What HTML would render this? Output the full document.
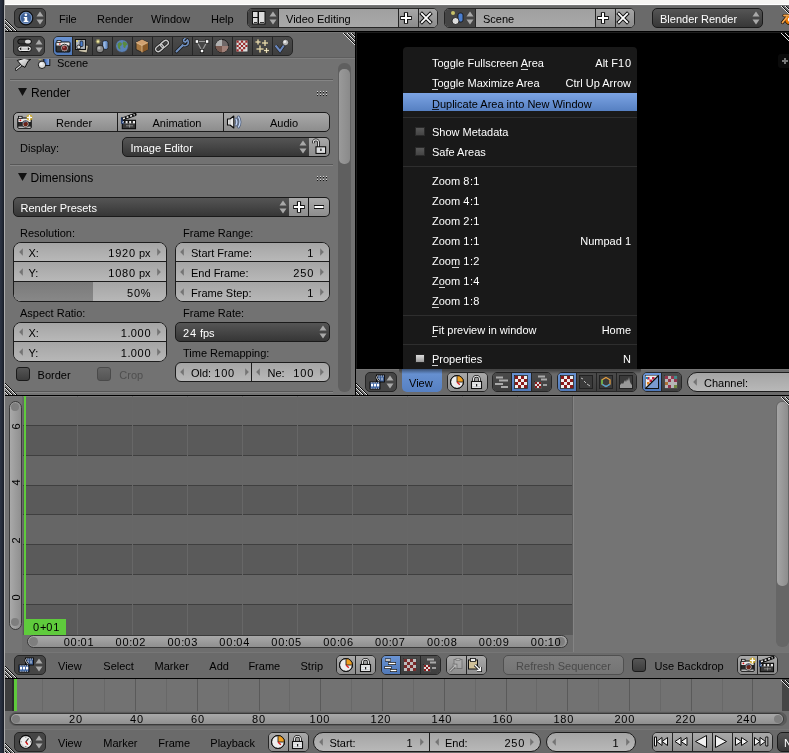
<!DOCTYPE html>
<html><head><meta charset="utf-8"><style>
*{margin:0;padding:0;box-sizing:border-box}
html,body{width:789px;height:753px;overflow:hidden;background:#727272;font-family:"Liberation Sans",sans-serif;font-size:11px;color:#000}
.a{position:absolute}
.t{position:absolute;white-space:nowrap;line-height:1}
.d{letter-spacing:0.8px}
body{will-change:transform}
.corner{position:absolute;width:11px;height:11px;background:repeating-linear-gradient(45deg,#1a1a1a 0 1.1px,#b8b8b8 1.1px 2.2px);clip-path:polygon(0 0,100% 100%,0 100%)}
</style></head><body>
<div class="a" style="left:0px;top:0px;width:4px;height:753px;background:linear-gradient(90deg,#2b3242,#252c3a 50%,#161a24)"></div>
<div class="a" style="left:4px;top:0px;width:1px;height:753px;background:#adadad"></div>
<div class="a" style="left:5px;top:0px;width:784px;height:5px;background:#f6f5f3;border-bottom:1px solid #fff"></div>
<div class="a" style="left:5px;top:5px;width:784px;height:26px;background:#6a6a6a;border-top:1px solid #767676"></div>
<div class="a" style="left:5px;top:31px;width:784px;height:1px;background:#000"></div>
<div class="a" style="left:14px;top:8px;width:32px;height:20px;background:#454545;border:1px solid #262626;border-radius:5px"></div>
<svg class="a" style="left:18px;top:10px;" width="16" height="16" viewBox="0 0 16 16"><circle cx="8" cy="8" r="6.8" fill="#3d5f95" stroke="#111" stroke-width="1.2"/><circle cx="8" cy="8" r="5.6" fill="none" stroke="#8aa6cf" stroke-width="0.8"/><rect x="6.6" y="7" width="2.6" height="4.6" fill="#fff"/><rect x="5.6" y="10.8" width="4.8" height="1.3" fill="#fff"/><rect x="5.8" y="7" width="2.4" height="1.1" fill="#fff"/><circle cx="7.9" cy="4.8" r="1.3" fill="#fff"/></svg>
<svg class="a" style="left:36px;top:11px;" width="8" height="14" viewBox="0 0 8 14"><path d="M4 0.5L7.5 5.5H0.5Z" fill="#a9a9a9"/><path d="M4 13.5L7.5 8.5H0.5Z" fill="#a9a9a9"/></svg>
<div class="t" style="left:59px;top:14.2px;font-size:11px;color:#000;">File</div>
<div class="t" style="left:97px;top:14.2px;font-size:11px;color:#000;">Render</div>
<div class="t" style="left:151px;top:14.2px;font-size:11px;color:#000;">Window</div>
<div class="t" style="left:211px;top:14.2px;font-size:11px;color:#000;">Help</div>
<svg class="a" style="left:5px;top:19px;" width="12" height="12" viewBox="0 0 12 12"><rect x="0" y="0" width="1" height="1" fill="#0a0a0a"/><rect x="0" y="1" width="1" height="1" fill="#e6e6e6"/><rect x="1" y="1" width="1" height="1" fill="#0a0a0a"/><rect x="1" y="2" width="1" height="1" fill="#e6e6e6"/><rect x="2" y="2" width="1" height="1" fill="#0a0a0a"/><rect x="2" y="3" width="1" height="1" fill="#e6e6e6"/><rect x="3" y="3" width="1" height="1" fill="#0a0a0a"/><rect x="0" y="4" width="1" height="1" fill="#0a0a0a"/><rect x="3" y="4" width="1" height="1" fill="#e6e6e6"/><rect x="4" y="4" width="1" height="1" fill="#0a0a0a"/><rect x="0" y="5" width="1" height="1" fill="#e6e6e6"/><rect x="1" y="5" width="1" height="1" fill="#0a0a0a"/><rect x="4" y="5" width="1" height="1" fill="#e6e6e6"/><rect x="5" y="5" width="1" height="1" fill="#0a0a0a"/><rect x="1" y="6" width="1" height="1" fill="#e6e6e6"/><rect x="2" y="6" width="1" height="1" fill="#0a0a0a"/><rect x="5" y="6" width="1" height="1" fill="#e6e6e6"/><rect x="6" y="6" width="1" height="1" fill="#0a0a0a"/><rect x="2" y="7" width="1" height="1" fill="#e6e6e6"/><rect x="3" y="7" width="1" height="1" fill="#0a0a0a"/><rect x="6" y="7" width="1" height="1" fill="#e6e6e6"/><rect x="7" y="7" width="1" height="1" fill="#0a0a0a"/><rect x="0" y="8" width="1" height="1" fill="#0a0a0a"/><rect x="3" y="8" width="1" height="1" fill="#e6e6e6"/><rect x="4" y="8" width="1" height="1" fill="#0a0a0a"/><rect x="7" y="8" width="1" height="1" fill="#e6e6e6"/><rect x="8" y="8" width="1" height="1" fill="#0a0a0a"/><rect x="0" y="9" width="1" height="1" fill="#e6e6e6"/><rect x="1" y="9" width="1" height="1" fill="#0a0a0a"/><rect x="4" y="9" width="1" height="1" fill="#e6e6e6"/><rect x="5" y="9" width="1" height="1" fill="#0a0a0a"/><rect x="8" y="9" width="1" height="1" fill="#e6e6e6"/><rect x="9" y="9" width="1" height="1" fill="#0a0a0a"/><rect x="1" y="10" width="1" height="1" fill="#e6e6e6"/><rect x="2" y="10" width="1" height="1" fill="#0a0a0a"/><rect x="5" y="10" width="1" height="1" fill="#e6e6e6"/><rect x="6" y="10" width="1" height="1" fill="#0a0a0a"/><rect x="9" y="10" width="1" height="1" fill="#e6e6e6"/><rect x="10" y="10" width="1" height="1" fill="#0a0a0a"/><rect x="2" y="11" width="1" height="1" fill="#e6e6e6"/><rect x="3" y="11" width="1" height="1" fill="#0a0a0a"/><rect x="6" y="11" width="1" height="1" fill="#e6e6e6"/><rect x="7" y="11" width="1" height="1" fill="#0a0a0a"/><rect x="10" y="11" width="1" height="1" fill="#e6e6e6"/><rect x="11" y="11" width="1" height="1" fill="#0a0a0a"/></svg>
<div class="a" style="left:247px;top:8px;width:191px;height:20px;border:1px solid #262626;border-radius:5px;overflow:hidden;background:linear-gradient(#a0a0a0,#a8a8a8)"><div class="a" style="left:0;top:0;width:31px;height:18px;background:#454545;border-right:1px solid #262626"></div><div class="a" style="left:150px;top:0;width:20px;height:18px;background:linear-gradient(#a6a6a6,#8c8c8c);border-left:1px solid #262626"></div><div class="a" style="left:170px;top:0;width:20px;height:18px;background:linear-gradient(#a6a6a6,#8c8c8c);border-left:1px solid #262626"></div></div>
<svg class="a" style="left:399px;top:11px;" width="14" height="14" viewBox="0 0 14 14"><path d="M7 1.2v11.6M1.2 7h11.6" stroke="#111" stroke-width="4.2"/><path d="M7 2v10M2 7h10" stroke="#fff" stroke-width="2"/></svg>
<svg class="a" style="left:419px;top:11px;" width="14" height="14" viewBox="0 0 14 14"><path d="M1.6 1.6l10.8 10.8M12.4 1.6l-10.8 10.8" stroke="#111" stroke-width="3.8"/><path d="M2.2 2.2l9.6 9.6M11.8 2.2l-9.6 9.6" stroke="#fff" stroke-width="1.8"/></svg>
<svg class="a" style="left:252px;top:11px;" width="14" height="14" viewBox="0 0 14 14"><rect x="0.5" y="0.5" width="5.5" height="6" fill="#ddd" stroke="#111"/><rect x="0.5" y="6.5" width="5.5" height="6.5" fill="#ddd" stroke="#111"/><rect x="6.5" y="0.5" width="6.5" height="12.5" fill="#ddd" stroke="#111"/><path d="M2 11.5h3M8 11.5h4" stroke="#333"/></svg>
<svg class="a" style="left:269px;top:11px;" width="8" height="14" viewBox="0 0 8 14"><path d="M4 0.5L7.5 5.5H0.5Z" fill="#a9a9a9"/><path d="M4 13.5L7.5 8.5H0.5Z" fill="#a9a9a9"/></svg>
<div class="t" style="left:286px;top:14.2px;font-size:11px;color:#000;">Video Editing</div>
<div class="a" style="left:444px;top:8px;width:191px;height:20px;border:1px solid #262626;border-radius:5px;overflow:hidden;background:linear-gradient(#a0a0a0,#a8a8a8)"><div class="a" style="left:0;top:0;width:31px;height:18px;background:#454545;border-right:1px solid #262626"></div><div class="a" style="left:150px;top:0;width:20px;height:18px;background:linear-gradient(#a6a6a6,#8c8c8c);border-left:1px solid #262626"></div><div class="a" style="left:170px;top:0;width:20px;height:18px;background:linear-gradient(#a6a6a6,#8c8c8c);border-left:1px solid #262626"></div></div>
<svg class="a" style="left:596px;top:11px;" width="14" height="14" viewBox="0 0 14 14"><path d="M7 1.2v11.6M1.2 7h11.6" stroke="#111" stroke-width="4.2"/><path d="M7 2v10M2 7h10" stroke="#fff" stroke-width="2"/></svg>
<svg class="a" style="left:616px;top:11px;" width="14" height="14" viewBox="0 0 14 14"><path d="M1.6 1.6l10.8 10.8M12.4 1.6l-10.8 10.8" stroke="#111" stroke-width="3.8"/><path d="M2.2 2.2l9.6 9.6M11.8 2.2l-9.6 9.6" stroke="#fff" stroke-width="1.8"/></svg>
<svg class="a" style="left:449px;top:10px;" width="16" height="16" viewBox="0 0 16 16"><circle cx="4" cy="3" r="2" fill="#e8e070" opacity="0.8"/><rect x="9" y="3" width="5" height="9" rx="2" fill="#4a7ed0" stroke="#111" stroke-width="0.8"/><circle cx="6.5" cy="11" r="3.5" fill="#ddd" stroke="#111" stroke-width="0.8"/></svg>
<svg class="a" style="left:466px;top:11px;" width="8" height="14" viewBox="0 0 8 14"><path d="M4 0.5L7.5 5.5H0.5Z" fill="#a9a9a9"/><path d="M4 13.5L7.5 8.5H0.5Z" fill="#a9a9a9"/></svg>
<div class="t" style="left:483px;top:14.2px;font-size:11px;color:#000;">Scene</div>
<div class="a" style="left:652px;top:8px;width:111px;height:20px;background:linear-gradient(#555,#373737);border:1px solid #1a1a1a;border-radius:5px"></div>
<div class="t" style="left:660px;top:14.2px;font-size:11px;color:#fff;">Blender Render</div>
<svg class="a" style="left:752px;top:11px;" width="8" height="14" viewBox="0 0 8 14"><path d="M4 0.5L7.5 5.5H0.5Z" fill="#a9a9a9"/><path d="M4 13.5L7.5 8.5H0.5Z" fill="#a9a9a9"/></svg>
<svg class="a" style="left:780px;top:13px;" width="9" height="12" viewBox="0 0 9 12"><path d="M4 2.5H9M2.5 9.5L6.5 4.5" stroke="#1a1008" stroke-width="3.2" stroke-linecap="round"/><circle cx="9.5" cy="7" r="4.6" fill="#e87800" stroke="#1a1008" stroke-width="0.9"/><path d="M4 2.5H9M2.5 9.5L6.5 4.5" stroke="#f6a850" stroke-width="1.8" stroke-linecap="round"/><circle cx="10" cy="6.6" r="2.2" fill="#fff"/></svg>
<svg class="a" style="left:781px;top:6px;" width="8" height="12" viewBox="0 0 8 12"><rect x="0" y="0" width="1" height="1" fill="#e6e6e6"/><rect x="1" y="0" width="1" height="1" fill="#0a0a0a"/><rect x="4" y="0" width="1" height="1" fill="#e6e6e6"/><rect x="5" y="0" width="1" height="1" fill="#0a0a0a"/><rect x="1" y="1" width="1" height="1" fill="#e6e6e6"/><rect x="2" y="1" width="1" height="1" fill="#0a0a0a"/><rect x="5" y="1" width="1" height="1" fill="#e6e6e6"/><rect x="6" y="1" width="1" height="1" fill="#0a0a0a"/><rect x="2" y="2" width="1" height="1" fill="#e6e6e6"/><rect x="3" y="2" width="1" height="1" fill="#0a0a0a"/><rect x="6" y="2" width="1" height="1" fill="#e6e6e6"/><rect x="7" y="2" width="1" height="1" fill="#0a0a0a"/><rect x="3" y="3" width="1" height="1" fill="#e6e6e6"/><rect x="4" y="3" width="1" height="1" fill="#0a0a0a"/><rect x="7" y="3" width="1" height="1" fill="#e6e6e6"/><rect x="4" y="4" width="1" height="1" fill="#e6e6e6"/><rect x="5" y="4" width="1" height="1" fill="#0a0a0a"/><rect x="5" y="5" width="1" height="1" fill="#e6e6e6"/><rect x="6" y="5" width="1" height="1" fill="#0a0a0a"/><rect x="6" y="6" width="1" height="1" fill="#e6e6e6"/><rect x="7" y="6" width="1" height="1" fill="#0a0a0a"/><rect x="7" y="7" width="1" height="1" fill="#e6e6e6"/></svg>
<div class="a" style="left:5px;top:32px;width:350px;height:363px;background:#727272"></div>
<div class="a" style="left:5px;top:32px;width:350px;height:26px;background:#6a6a6a;border-top:1px solid #767676;border-bottom:1px solid #5e5e5e"></div>
<div class="a" style="left:5px;top:58px;width:350px;height:1px;background:#7e7e7e"></div>
<div class="a" style="left:13px;top:36px;width:32px;height:20px;background:#454545;border:1px solid #262626;border-radius:5px"></div>
<svg class="a" style="left:17px;top:38px;" width="16" height="16" viewBox="0 0 16 16"><rect x="0.8" y="1.2" width="13.5" height="4.8" rx="2.4" fill="#3a3a3a" stroke="#0a0a0a"/><rect x="8" y="1.7" width="5.8" height="3.8" rx="1.8" fill="#d8d8d8"/><rect x="0.8" y="8" width="13.5" height="5.5" rx="2.5" fill="#f0f0f0" stroke="#0a0a0a"/><rect x="4" y="9.5" width="7" height="2.5" fill="#c8c8c8"/><path d="M2.3 10.75L4.2 9.1V12.4ZM12.8 10.75L10.9 9.1V12.4Z" fill="#111"/></svg>
<svg class="a" style="left:35px;top:39px;" width="8" height="14" viewBox="0 0 8 14"><path d="M4 0.5L7.5 5.5H0.5Z" fill="#a9a9a9"/><path d="M4 13.5L7.5 8.5H0.5Z" fill="#a9a9a9"/></svg>
<div class="a" style="left:53px;top:36px;width:240px;height:20px;border:1px solid #262626;border-radius:5px;overflow:hidden;background:linear-gradient(#4b4b4b,#3e3e3e)"><div class="a" style="left:18px;top:0;width:1px;height:18px;background:#262626"></div><div class="a" style="left:38px;top:0;width:1px;height:18px;background:#262626"></div><div class="a" style="left:58px;top:0;width:1px;height:18px;background:#262626"></div><div class="a" style="left:78px;top:0;width:1px;height:18px;background:#262626"></div><div class="a" style="left:98px;top:0;width:1px;height:18px;background:#262626"></div><div class="a" style="left:118px;top:0;width:1px;height:18px;background:#262626"></div><div class="a" style="left:138px;top:0;width:1px;height:18px;background:#262626"></div><div class="a" style="left:158px;top:0;width:1px;height:18px;background:#262626"></div><div class="a" style="left:178px;top:0;width:1px;height:18px;background:#262626"></div><div class="a" style="left:198px;top:0;width:1px;height:18px;background:#262626"></div><div class="a" style="left:218px;top:0;width:1px;height:18px;background:#262626"></div><div class="a" style="left:0;top:0;width:18px;height:18px;background:linear-gradient(#6a94d4,#4f78b8)"></div></div>
<svg class="a" style="left:55px;top:38px;" width="16" height="16" viewBox="0 0 16 16"><rect x="1" y="4" width="14" height="10" rx="1" fill="#333" stroke="#0a0a0a"/><rect x="1.5" y="4.5" width="13" height="3" fill="#e8e8e8"/><rect x="2" y="2.5" width="4" height="2" fill="#ddd" stroke="#111" stroke-width="0.7"/><circle cx="9.5" cy="10" r="3.8" fill="#ccc" stroke="#111" stroke-width="0.8"/><circle cx="9.5" cy="10" r="2.6" fill="#6a2020"/><circle cx="8.8" cy="9.3" r="1" fill="#c06060"/><rect x="4" y="5.5" width="1.5" height="1.2" fill="#e22"/></svg>
<svg class="a" style="left:74px;top:38px;" width="16" height="16" viewBox="0 0 16 16"><path d="M6 6L14.5 7.5L13 15L4.5 13.5Z" fill="#c8c0a8" stroke="#222" stroke-width="0.8"/><rect x="1.5" y="1.5" width="10" height="10" fill="#98a0a8" stroke="#111"/><rect x="2.5" y="2.5" width="8" height="8" fill="#b0b8c0"/><circle cx="4.8" cy="9" r="2" fill="#ddd" stroke="#111" stroke-width="0.8"/><rect x="6" y="3" width="3" height="5.5" rx="1" fill="#4a7ed0" stroke="#111" stroke-width="0.7"/><circle cx="3" cy="3" r="1" fill="#e8d870"/></svg>
<svg class="a" style="left:94px;top:38px;" width="16" height="16" viewBox="0 0 16 16"><circle cx="4" cy="3.5" r="2.4" fill="#c8c070" opacity="0.5"/><circle cx="4" cy="3.5" r="1.2" fill="#f0e8a0"/><rect x="8.5" y="2.5" width="5.5" height="9" rx="2" fill="#6a90c8" stroke="#222" stroke-width="0.8"/><rect x="9.5" y="4" width="2" height="6" fill="#9ab8e0"/><circle cx="6" cy="11" r="3.8" fill="#8a8a8a" stroke="#111" stroke-width="0.8"/><circle cx="5" cy="10" r="1.5" fill="#bbb"/></svg>
<svg class="a" style="left:114px;top:38px;" width="16" height="16" viewBox="0 0 16 16"><circle cx="8" cy="8" r="6.5" fill="#5a82b8" stroke="#1a1a1a"/><path d="M3.5 6c1.5-2 3-2 4-1s0 2.5-1 3 0 2 0 3-2 0-2.5-1.5M9.5 3.5c2 0 3.5 1.5 4 3.5-1 0-2 .5-2 2s-1.5 1-2 0 .5-2-.5-2.5 0-2.5.5-3" fill="#5a8a40"/><circle cx="8" cy="8" r="6.5" fill="none" stroke="#c8d8e8" stroke-width="0.5" opacity="0.5"/></svg>
<svg class="a" style="left:134px;top:38px;" width="16" height="16" viewBox="0 0 16 16"><path d="M8 1.5L14 4.5V11.5L8 14.5L2 11.5V4.5Z" fill="#a87840" stroke="#222" stroke-width="0.9"/><path d="M2 4.5L8 1.5L14 4.5L8 7.5Z" fill="#d0a070"/><path d="M8 7.5L14 4.5V11.5L8 14.5Z" fill="#8a5a28"/><path d="M2 4.5L8 7.5L14 4.5M8 7.5V14.5" stroke="#e8c8a0" fill="none" stroke-width="0.7"/></svg>
<svg class="a" style="left:154px;top:38px;" width="16" height="16" viewBox="0 0 16 16"><g transform="rotate(-40 8 8)"><rect x="0.5" y="5.5" width="8.5" height="5" rx="2.5" fill="none" stroke="#1a1a1a" stroke-width="2.8"/><rect x="7" y="5.5" width="8.5" height="5" rx="2.5" fill="none" stroke="#1a1a1a" stroke-width="2.8"/><rect x="0.5" y="5.5" width="8.5" height="5" rx="2.5" fill="none" stroke="#c8c8c8" stroke-width="1.4"/><rect x="7" y="5.5" width="8.5" height="5" rx="2.5" fill="none" stroke="#c8c8c8" stroke-width="1.4"/></g></svg>
<svg class="a" style="left:174px;top:38px;" width="16" height="16" viewBox="0 0 16 16"><path d="M2.5 13.5L8.5 7.5" stroke="#1a1a1a" stroke-width="3.6" stroke-linecap="round"/><path d="M8 6.5a3.5 3.5 0 1 0 5.5-4.5L11.5 4 10 3.5 9.5 2 11.5 0" fill="none" stroke="#1a1a1a" stroke-width="3"/><path d="M2.5 13.5L8.5 7.5" stroke="#7090c0" stroke-width="2" stroke-linecap="round"/><path d="M8 6.5a3.5 3.5 0 1 0 5.5-4.5L11.5 4 10 3.5 9.5 2 11.5 0" fill="none" stroke="#7090c0" stroke-width="1.6"/></svg>
<svg class="a" style="left:194px;top:38px;" width="16" height="16" viewBox="0 0 16 16"><path d="M3 3.5H13L8 13Z" fill="none" stroke="#999" stroke-width="1.2"/><rect x="1.2" y="1.8" width="3.4" height="3.4" fill="#fff" stroke="#111" stroke-width="0.7"/><rect x="11.4" y="1.8" width="3.4" height="3.4" fill="#fff" stroke="#111" stroke-width="0.7"/><rect x="6.3" y="11.3" width="3.4" height="3.4" fill="#fff" stroke="#111" stroke-width="0.7"/></svg>
<svg class="a" style="left:214px;top:38px;" width="16" height="16" viewBox="0 0 16 16"><circle cx="8" cy="8" r="6.5" fill="#706868" stroke="#1a1a1a"/><path d="M8 1.5A6.5 6.5 0 0 0 1.5 8H8Z" fill="#b0b0b0"/><path d="M8 8H14.5A6.5 6.5 0 0 1 8 14.5Z" fill="#a08078"/><path d="M8 8V14.5A6.5 6.5 0 0 1 1.5 8Z" fill="#7a5a50"/></svg>
<svg class="a" style="left:234px;top:38px;" width="16" height="16" viewBox="0 0 16 16"><rect x="1.5" y="1.5" width="13" height="13" fill="#3a3a3a"/><rect x="2.5" y="2.5" width="11" height="11" fill="#ddd"/><path d="M2.5 2.5h2.2v2.2H2.5zM6.9 2.5h2.2v2.2H6.9zM11.3 2.5h2.2v2.2h-2.2zM4.7 4.7h2.2v2.2H4.7zM9.1 4.7h2.2v2.2H9.1zM2.5 6.9h2.2v2.2H2.5zM6.9 6.9h2.2v2.2H6.9zM11.3 6.9h2.2v2.2h-2.2zM4.7 9.1h2.2v2.2H4.7zM9.1 9.1h2.2v2.2H9.1zM2.5 11.3h2.2v2.2H2.5zM6.9 11.3h2.2v2.2H6.9z" fill="#9a2a2a"/></svg>
<svg class="a" style="left:254px;top:38px;" width="16" height="16" viewBox="0 0 16 16"><path d="M4 1.5v5M1.5 4h5M11 2v6M8 5h6M6 7.5v7M2.5 11h7M12.5 10v5M10 12.5h5" stroke="#c8b060" stroke-width="1.6" opacity="0.6"/><path d="M4 1.5v5M1.5 4h5M11 2v6M8 5h6M6 7.5v7M2.5 11h7M12.5 10v5M10 12.5h5" stroke="#f8f0d0" stroke-width="0.8"/></svg>
<svg class="a" style="left:274px;top:38px;" width="16" height="16" viewBox="0 0 16 16"><path d="M1.5 7.5L6 13L11.5 5" fill="none" stroke="#222" stroke-width="3.4"/><path d="M1.5 7.5L6 13L11.5 5" fill="none" stroke="#6a88c0" stroke-width="2"/><circle cx="11.5" cy="4.5" r="3.2" fill="#bbb" stroke="#222" stroke-width="0.8"/><circle cx="10.8" cy="3.8" r="1.3" fill="#eee"/></svg>
<svg class="a" style="left:15px;top:57px;clip-path:inset(2px 0 0 0)" width="17" height="14" viewBox="0 0 17 14"><defs><linearGradient id="pg" x1="0" y1="0" x2="1" y2="1"><stop offset="0" stop-color="#fff"/><stop offset="1" stop-color="#999"/></linearGradient><linearGradient id="cg" x1="0" y1="0" x2="1" y2="0"><stop offset="0" stop-color="#2a58b0"/><stop offset="1" stop-color="#9ab8e8"/></linearGradient></defs><path d="M6.2 8.2L1.3 12.3" stroke="#0a0a0a" stroke-width="2.8" stroke-linecap="round"/><path d="M6.2 8.2L1.3 12.3" stroke="#ddd" stroke-width="1.2" stroke-linecap="round"/><path d="M2.3 3.5L9.2 1.4L15.6 2.5L13 4.3L10 10.4L6.6 8.6Z" fill="url(#pg)" stroke="#0a0a0a" stroke-width="1" stroke-linejoin="round"/></svg>
<svg class="a" style="left:37px;top:57px;clip-path:inset(2px 0 0 0)" width="14" height="14" viewBox="0 0 14 14"><circle cx="3" cy="1" r="2" fill="#d8d070" opacity="0.6"/><rect x="6.8" y="0" width="6" height="8.5" fill="url(#cg)" stroke="#0a0a0a" stroke-width="0.9"/><circle cx="5" cy="7.8" r="3.7" fill="#ddd" stroke="#0a0a0a" stroke-width="0.9"/><circle cx="4.2" cy="7" r="1.6" fill="#f4f4f4"/></svg>
<div class="t" style="left:57px;top:58.2px;font-size:11px;color:#000;">Scene</div>
<div class="a" style="left:10px;top:79px;width:323px;height:1px;background:#575757"></div>
<div class="a" style="left:10px;top:80px;width:323px;height:1px;background:#858585"></div>
<svg class="a" style="left:18px;top:88px;" width="9" height="8" viewBox="0 0 9 8"><path d="M0 0H9L4.5 8Z" fill="#111"/></svg>
<div class="t" style="left:31px;top:87.0px;font-size:12px;color:#000;">Render</div>
<svg class="a" style="left:317px;top:91px;" width="12" height="6" viewBox="0 0 12 6"><rect x="0" y="0" width="1" height="1" fill="#d8d8d8"/><rect x="0" y="1" width="1" height="1" fill="#141414"/><rect x="0" y="3" width="1" height="1" fill="#d8d8d8"/><rect x="0" y="4" width="1" height="1" fill="#141414"/><rect x="3" y="0" width="1" height="1" fill="#d8d8d8"/><rect x="3" y="1" width="1" height="1" fill="#141414"/><rect x="3" y="3" width="1" height="1" fill="#d8d8d8"/><rect x="3" y="4" width="1" height="1" fill="#141414"/><rect x="6" y="0" width="1" height="1" fill="#d8d8d8"/><rect x="6" y="1" width="1" height="1" fill="#141414"/><rect x="6" y="3" width="1" height="1" fill="#d8d8d8"/><rect x="6" y="4" width="1" height="1" fill="#141414"/><rect x="9" y="0" width="1" height="1" fill="#d8d8d8"/><rect x="9" y="1" width="1" height="1" fill="#141414"/><rect x="9" y="3" width="1" height="1" fill="#d8d8d8"/><rect x="9" y="4" width="1" height="1" fill="#141414"/></svg>
<div class="a" style="left:13px;top:112px;width:317px;height:20px;border:1px solid #1c1c1c;border-radius:5px;overflow:hidden;background:linear-gradient(#a9a9a9,#8d8d8d)"><div class="a" style="left:103px;top:0;width:1px;height:18px;background:#1c1c1c"></div><div class="a" style="left:209px;top:0;width:1px;height:18px;background:#1c1c1c"></div></div>
<svg class="a" style="left:16px;top:114px;" width="17" height="16" viewBox="0 0 17 16"><rect x="1.8" y="4" width="13.4" height="10.2" rx="0.8" fill="#2a2a2a" stroke="#0a0a0a" stroke-width="1"/><rect x="2.4" y="4.6" width="12.2" height="3.4" fill="#e8e8e8"/><rect x="2.4" y="12.6" width="12.2" height="1.2" fill="#ddd"/><rect x="2.5" y="2.3" width="3.6" height="2" fill="#eee" stroke="#0a0a0a" stroke-width="0.8"/><circle cx="4.4" cy="6.3" r="0.9" fill="#e01010"/><circle cx="9.6" cy="10" r="3.4" fill="#e0e0e0" stroke="#0a0a0a" stroke-width="0.7"/><circle cx="9.6" cy="10" r="2.4" fill="#6a2418"/><path d="M7.4 9.2a2.4 2.4 0 0 1 3-1.5" stroke="#4a6a9a" stroke-width="1" fill="none"/><circle cx="13.5" cy="3.5" r="3" fill="#d8b020" opacity="0.8"/><path d="M13.5 1v5M11 3.5h5" stroke="#fff" stroke-width="1"/><path d="M12.6 2.6l1.8 1.8M14.4 2.6l-1.8 1.8" stroke="#fff" stroke-width="0.8"/></svg>
<div class="t" style="left:56px;top:117.7px;font-size:11px;color:#000;">Render</div>
<svg class="a" style="left:119px;top:113px;" width="18" height="17" viewBox="0 0 18 17"><rect x="3.3" y="7.3" width="13.2" height="8.4" fill="#3a3a3a" stroke="#0a0a0a" stroke-width="1.1"/><rect x="4" y="8" width="12" height="2.4" fill="#eee"/><path d="M5 9.2h1.6M8.6 9.2h1.6M12.2 9.2h1.6" stroke="#111" stroke-width="2.4"/><path d="M7 12.8h7M10.5 11.5v3" stroke="#999" stroke-width="0.8"/><path d="M3.5 6L16 1.5" stroke="#0a0a0a" stroke-width="3.2" stroke-linecap="round"/><path d="M4 5.8L15.6 1.6" stroke="#eee" stroke-width="1.6" stroke-dasharray="2 1.8"/><path d="M2.5 4.5L4.5 10.5H2.5Z" fill="#aaccf0" stroke="#1a3060" stroke-width="0.9"/></svg>
<div class="t" style="left:152.5px;top:118.2px;font-size:11px;color:#000;">Animation</div>
<svg class="a" style="left:224px;top:114px;" width="20" height="16" viewBox="0 0 20 16"><path d="M3.5 5h2.5l3.8-3v12l-3.8-3h-2.5z" fill="#e8e8e8" stroke="#0a0a0a" stroke-width="1.1" stroke-linejoin="round"/><path d="M6 5v6" stroke="#999" stroke-width="0.6"/><path d="M12 5q1.8 3 0 6M14.5 3q3 5 0 10" fill="none" stroke="#4a5a78" stroke-width="2.8" stroke-linecap="round"/><path d="M12 5q1.8 3 0 6M14.5 3q3 5 0 10" fill="none" stroke="#c8d8f4" stroke-width="1.3" stroke-linecap="round"/></svg>
<div class="t" style="left:270px;top:118.2px;font-size:11px;color:#000;">Audio</div>
<div class="t" style="left:20px;top:143.2px;font-size:11px;color:#000;">Display:</div>
<div class="a" style="left:122px;top:137px;width:188px;height:20px;background:linear-gradient(#555,#363636);border:1px solid #1a1a1a;border-radius:5px 0 0 5px"></div>
<div class="t" style="left:130.5px;top:143.2px;font-size:11px;color:#fff;">Image Editor</div>
<svg class="a" style="left:299px;top:140px;" width="8" height="14" viewBox="0 0 8 14"><path d="M4 0.5L7.5 5.5H0.5Z" fill="#a9a9a9"/><path d="M4 13.5L7.5 8.5H0.5Z" fill="#a9a9a9"/></svg>
<div class="a" style="left:309px;top:137px;width:21px;height:20px;background:linear-gradient(#a9a9a9,#8d8d8d);border:1px solid #1a1a1a;border-left:none;border-radius:0 5px 5px 0"></div>
<svg class="a" style="left:309px;top:137px;" width="20" height="20" viewBox="0 0 20 20"><path d="M9.5 10V5.5a2.6 2.6 0 0 0-5.2 0v.8" fill="none" stroke="#0a0a0a" stroke-width="2.6"/><path d="M9.5 10V5.5a2.6 2.6 0 0 0-5.2 0v.8" fill="none" stroke="#e0e0e0" stroke-width="1.1"/><rect x="7" y="9.8" width="9.6" height="6.6" fill="#e8e8e8" stroke="#0a0a0a" stroke-width="1.1"/><path d="M8 12h7.5M8 14h7.5" stroke="#b8c0c8" stroke-width="0.6"/><rect x="11.3" y="11.6" width="1.2" height="2.4" fill="#111"/></svg>
<div class="a" style="left:10px;top:164px;width:323px;height:1px;background:#575757"></div>
<div class="a" style="left:10px;top:165px;width:323px;height:1px;background:#858585"></div>
<svg class="a" style="left:18px;top:173px;" width="9" height="8" viewBox="0 0 9 8"><path d="M0 0H9L4.5 8Z" fill="#111"/></svg>
<div class="t" style="left:30.5px;top:171.9px;font-size:12px;color:#000;">Dimensions</div>
<svg class="a" style="left:317px;top:176px;" width="12" height="6" viewBox="0 0 12 6"><rect x="0" y="0" width="1" height="1" fill="#d8d8d8"/><rect x="0" y="1" width="1" height="1" fill="#141414"/><rect x="0" y="3" width="1" height="1" fill="#d8d8d8"/><rect x="0" y="4" width="1" height="1" fill="#141414"/><rect x="3" y="0" width="1" height="1" fill="#d8d8d8"/><rect x="3" y="1" width="1" height="1" fill="#141414"/><rect x="3" y="3" width="1" height="1" fill="#d8d8d8"/><rect x="3" y="4" width="1" height="1" fill="#141414"/><rect x="6" y="0" width="1" height="1" fill="#d8d8d8"/><rect x="6" y="1" width="1" height="1" fill="#141414"/><rect x="6" y="3" width="1" height="1" fill="#d8d8d8"/><rect x="6" y="4" width="1" height="1" fill="#141414"/><rect x="9" y="0" width="1" height="1" fill="#d8d8d8"/><rect x="9" y="1" width="1" height="1" fill="#141414"/><rect x="9" y="3" width="1" height="1" fill="#d8d8d8"/><rect x="9" y="4" width="1" height="1" fill="#141414"/></svg>
<div class="a" style="left:13px;top:197px;width:277px;height:20px;background:linear-gradient(#555,#363636);border:1px solid #1a1a1a;border-radius:5px 0 0 5px"></div>
<div class="t" style="left:20.5px;top:202.9px;font-size:11px;color:#fff;">Render Presets</div>
<svg class="a" style="left:279px;top:200px;" width="8" height="14" viewBox="0 0 8 14"><path d="M4 0.5L7.5 5.5H0.5Z" fill="#a9a9a9"/><path d="M4 13.5L7.5 8.5H0.5Z" fill="#a9a9a9"/></svg>
<div class="a" style="left:289px;top:197px;width:41px;height:20px;border:1px solid #1a1a1a;border-left:none;border-radius:0 5px 5px 0;overflow:hidden;background:linear-gradient(#a9a9a9,#8d8d8d)"><div class="a" style="left:19px;top:0;width:1px;height:18px;background:#1a1a1a"></div></div>
<svg class="a" style="left:292px;top:200px;" width="14" height="14" viewBox="0 0 14 14"><path d="M7 1.2v11.6M1.2 7h11.6" stroke="#111" stroke-width="4.2"/><path d="M7 2v10M2 7h10" stroke="#fff" stroke-width="2"/></svg>
<svg class="a" style="left:312px;top:200px;" width="14" height="14" viewBox="0 0 14 14"><path d="M2 7h10" stroke="#111" stroke-width="4"/><path d="M2.5 7h9" stroke="#fff" stroke-width="2"/></svg>
<div class="t" style="left:20px;top:228.0px;font-size:11px;color:#000;">Resolution:</div>
<div class="t" style="left:183px;top:228.2px;font-size:11px;color:#000;">Frame Range:</div>
<div class="a" style="left:13px;top:242px;width:154px;height:60px;border:1px solid #1c1c1c;border-radius:8px;overflow:hidden;background:#b0b0b0"><div class="a" style="left:0;top:0px;width:152px;height:18px;background:linear-gradient(#a5a5a5,#b8b8b8)"></div><div class="a" style="left:0;top:18px;width:152px;height:1px;background:#1c1c1c"></div><div class="a" style="left:0;top:19px;width:152px;height:19px;background:linear-gradient(#a5a5a5,#b8b8b8)"></div><div class="a" style="left:0;top:38px;width:152px;height:1px;background:#1c1c1c"></div><div class="a" style="left:0;top:39px;width:152px;height:20px;background:linear-gradient(#a5a5a5,#b8b8b8)"></div></div>
<div class="a" style="left:14px;top:282px;width:79px;height:19px;background:linear-gradient(#7a7a7a,#888);border-radius:0 0 0 7px"></div>
<div class="t" style="left:28.5px;top:247.8px;font-size:11px;color:#000;">X:</div>
<div class="t" style="right:638.4px;top:247.8px;font-size:11px;color:#000;"><span class="d">1</span><span class="d">9</span><span class="d">2</span><span class="d">0</span> px</div>
<div class="t" style="left:28.5px;top:267.8px;font-size:11px;color:#000;">Y:</div>
<div class="t" style="right:638.4px;top:267.8px;font-size:11px;color:#000;"><span class="d">1</span><span class="d">0</span><span class="d">8</span><span class="d">0</span> px</div>
<div class="t" style="right:638.4px;top:287.8px;font-size:11px;color:#000;"><span class="d">5</span><span class="d">0</span>%</div>
<svg class="a" style="left:19px;top:248px;" width="4" height="8" viewBox="0 0 4 8"><path d="M3.8 0.2v7.6L0.2 4Z" fill="#747474"/></svg>
<svg class="a" style="left:157px;top:248px;" width="4" height="8" viewBox="0 0 4 8"><path d="M0.2 0.2v7.6L3.8 4Z" fill="#747474"/></svg>
<svg class="a" style="left:19px;top:268px;" width="4" height="8" viewBox="0 0 4 8"><path d="M3.8 0.2v7.6L0.2 4Z" fill="#747474"/></svg>
<svg class="a" style="left:157px;top:268px;" width="4" height="8" viewBox="0 0 4 8"><path d="M0.2 0.2v7.6L3.8 4Z" fill="#747474"/></svg>
<div class="a" style="left:175px;top:242px;width:155px;height:60px;border:1px solid #1c1c1c;border-radius:8px;overflow:hidden;background:#b0b0b0"><div class="a" style="left:0;top:0px;width:153px;height:18px;background:linear-gradient(#a5a5a5,#b8b8b8)"></div><div class="a" style="left:0;top:18px;width:153px;height:1px;background:#1c1c1c"></div><div class="a" style="left:0;top:19px;width:153px;height:19px;background:linear-gradient(#a5a5a5,#b8b8b8)"></div><div class="a" style="left:0;top:38px;width:153px;height:1px;background:#1c1c1c"></div><div class="a" style="left:0;top:39px;width:153px;height:20px;background:linear-gradient(#a5a5a5,#b8b8b8)"></div></div>
<div class="t" style="left:191px;top:247.8px;font-size:11px;color:#000;">Start Frame:</div>
<div class="t" style="right:474.9px;top:247.8px;font-size:11px;color:#000;"><span class="d">1</span></div>
<div class="t" style="left:191px;top:267.8px;font-size:11px;color:#000;">End Frame:</div>
<div class="t" style="right:474.9px;top:267.8px;font-size:11px;color:#000;"><span class="d">2</span><span class="d">5</span><span class="d">0</span></div>
<div class="t" style="left:191px;top:287.8px;font-size:11px;color:#000;">Frame Step:</div>
<div class="t" style="right:474.9px;top:287.8px;font-size:11px;color:#000;"><span class="d">1</span></div>
<svg class="a" style="left:180px;top:248px;" width="4" height="8" viewBox="0 0 4 8"><path d="M3.8 0.2v7.6L0.2 4Z" fill="#747474"/></svg>
<svg class="a" style="left:320px;top:248px;" width="4" height="8" viewBox="0 0 4 8"><path d="M0.2 0.2v7.6L3.8 4Z" fill="#747474"/></svg>
<svg class="a" style="left:180px;top:268px;" width="4" height="8" viewBox="0 0 4 8"><path d="M3.8 0.2v7.6L0.2 4Z" fill="#747474"/></svg>
<svg class="a" style="left:320px;top:268px;" width="4" height="8" viewBox="0 0 4 8"><path d="M0.2 0.2v7.6L3.8 4Z" fill="#747474"/></svg>
<svg class="a" style="left:180px;top:288px;" width="4" height="8" viewBox="0 0 4 8"><path d="M3.8 0.2v7.6L0.2 4Z" fill="#747474"/></svg>
<svg class="a" style="left:320px;top:288px;" width="4" height="8" viewBox="0 0 4 8"><path d="M0.2 0.2v7.6L3.8 4Z" fill="#747474"/></svg>
<div class="t" style="left:20px;top:308.2px;font-size:11px;color:#000;">Aspect Ratio:</div>
<div class="t" style="left:183px;top:308.2px;font-size:11px;color:#000;">Frame Rate:</div>
<div class="a" style="left:13px;top:322px;width:154px;height:40px;border:1px solid #1c1c1c;border-radius:8px;overflow:hidden;background:#b0b0b0"><div class="a" style="left:0;top:0px;width:152px;height:18px;background:linear-gradient(#a5a5a5,#b8b8b8)"></div><div class="a" style="left:0;top:18px;width:152px;height:1px;background:#1c1c1c"></div><div class="a" style="left:0;top:19px;width:152px;height:20px;background:linear-gradient(#a5a5a5,#b8b8b8)"></div></div>
<div class="t" style="left:28.5px;top:327.8px;font-size:11px;color:#000;">X:</div>
<div class="t" style="right:637.6px;top:327.8px;font-size:11px;color:#000;"><span class="d">1</span>.<span class="d">0</span><span class="d">0</span><span class="d">0</span></div>
<div class="t" style="left:28.5px;top:347.8px;font-size:11px;color:#000;">Y:</div>
<div class="t" style="right:637.6px;top:347.8px;font-size:11px;color:#000;"><span class="d">1</span>.<span class="d">0</span><span class="d">0</span><span class="d">0</span></div>
<svg class="a" style="left:19px;top:328px;" width="4" height="8" viewBox="0 0 4 8"><path d="M3.8 0.2v7.6L0.2 4Z" fill="#747474"/></svg>
<svg class="a" style="left:157px;top:328px;" width="4" height="8" viewBox="0 0 4 8"><path d="M0.2 0.2v7.6L3.8 4Z" fill="#747474"/></svg>
<svg class="a" style="left:19px;top:348px;" width="4" height="8" viewBox="0 0 4 8"><path d="M3.8 0.2v7.6L0.2 4Z" fill="#747474"/></svg>
<svg class="a" style="left:157px;top:348px;" width="4" height="8" viewBox="0 0 4 8"><path d="M0.2 0.2v7.6L3.8 4Z" fill="#747474"/></svg>
<div class="a" style="left:175px;top:322px;width:155px;height:20px;background:linear-gradient(#555,#363636);border:1px solid #1a1a1a;border-radius:5px"></div>
<div class="t" style="left:183px;top:328.2px;font-size:11px;color:#fff;"><span class="d">2</span><span class="d">4</span> fps</div>
<svg class="a" style="left:319px;top:325px;" width="8" height="14" viewBox="0 0 8 14"><path d="M4 0.5L7.5 5.5H0.5Z" fill="#a9a9a9"/><path d="M4 13.5L7.5 8.5H0.5Z" fill="#a9a9a9"/></svg>
<div class="t" style="left:183px;top:347.9px;font-size:11px;color:#000;">Time Remapping:</div>
<div class="a" style="left:175px;top:362px;width:155px;height:20px;border:1px solid #1c1c1c;border-radius:6px;overflow:hidden;background:linear-gradient(#a5a5a5,#b8b8b8)"><div class="a" style="left:75px;top:0;width:1px;height:18px;background:#1c1c1c"></div></div>
<div class="t" style="left:191px;top:367.8px;font-size:11px;color:#000;">Old: <span class="d">1</span><span class="d">0</span><span class="d">0</span></div>
<div class="t" style="left:267.5px;top:367.8px;font-size:11px;color:#000;">Ne:</div>
<div class="t" style="right:474.9px;top:367.8px;font-size:11px;color:#000;"><span class="d">1</span><span class="d">0</span><span class="d">0</span></div>
<svg class="a" style="left:180px;top:368px;" width="4" height="8" viewBox="0 0 4 8"><path d="M3.8 0.2v7.6L0.2 4Z" fill="#747474"/></svg>
<svg class="a" style="left:245px;top:368px;" width="4" height="8" viewBox="0 0 4 8"><path d="M0.2 0.2v7.6L3.8 4Z" fill="#747474"/></svg>
<svg class="a" style="left:256px;top:368px;" width="4" height="8" viewBox="0 0 4 8"><path d="M3.8 0.2v7.6L0.2 4Z" fill="#747474"/></svg>
<svg class="a" style="left:320px;top:368px;" width="4" height="8" viewBox="0 0 4 8"><path d="M0.2 0.2v7.6L3.8 4Z" fill="#747474"/></svg>
<div class="a" style="left:16px;top:367px;width:14px;height:14px;background:linear-gradient(#555,#3c3c3c);border:1px solid #1a1a1a;border-radius:3px"></div>
<div class="t" style="left:37.6px;top:369.7px;font-size:11px;color:#000;">Border</div>
<div class="a" style="left:97px;top:367px;width:14px;height:14px;background:linear-gradient(#666,#555);border:1px solid #4a4a4a;border-radius:3px"></div>
<div class="t" style="left:119.3px;top:369.7px;font-size:11px;color:#4f4f4f;">Crop</div>
<div class="a" style="left:10px;top:391px;width:323px;height:1px;background:#575757"></div>
<div class="a" style="left:10px;top:392px;width:323px;height:1px;background:#858585"></div>
<div class="a" style="left:338px;top:63px;width:13px;height:329px;background:#5f5f5f;border-radius:6px"></div>
<div class="a" style="left:339px;top:69px;width:11px;height:95px;background:linear-gradient(90deg,#9a9a9a,#8a8a8a);border-radius:5px"></div>
<svg class="a" style="left:343px;top:33px;" width="12" height="12" viewBox="0 0 12 12"><rect x="0" y="0" width="1" height="1" fill="#e6e6e6"/><rect x="1" y="0" width="1" height="1" fill="#0a0a0a"/><rect x="4" y="0" width="1" height="1" fill="#e6e6e6"/><rect x="5" y="0" width="1" height="1" fill="#0a0a0a"/><rect x="8" y="0" width="1" height="1" fill="#e6e6e6"/><rect x="9" y="0" width="1" height="1" fill="#0a0a0a"/><rect x="1" y="1" width="1" height="1" fill="#e6e6e6"/><rect x="2" y="1" width="1" height="1" fill="#0a0a0a"/><rect x="5" y="1" width="1" height="1" fill="#e6e6e6"/><rect x="6" y="1" width="1" height="1" fill="#0a0a0a"/><rect x="9" y="1" width="1" height="1" fill="#e6e6e6"/><rect x="10" y="1" width="1" height="1" fill="#0a0a0a"/><rect x="2" y="2" width="1" height="1" fill="#e6e6e6"/><rect x="3" y="2" width="1" height="1" fill="#0a0a0a"/><rect x="6" y="2" width="1" height="1" fill="#e6e6e6"/><rect x="7" y="2" width="1" height="1" fill="#0a0a0a"/><rect x="10" y="2" width="1" height="1" fill="#e6e6e6"/><rect x="11" y="2" width="1" height="1" fill="#0a0a0a"/><rect x="3" y="3" width="1" height="1" fill="#e6e6e6"/><rect x="4" y="3" width="1" height="1" fill="#0a0a0a"/><rect x="7" y="3" width="1" height="1" fill="#e6e6e6"/><rect x="8" y="3" width="1" height="1" fill="#0a0a0a"/><rect x="11" y="3" width="1" height="1" fill="#e6e6e6"/><rect x="4" y="4" width="1" height="1" fill="#e6e6e6"/><rect x="5" y="4" width="1" height="1" fill="#0a0a0a"/><rect x="8" y="4" width="1" height="1" fill="#e6e6e6"/><rect x="9" y="4" width="1" height="1" fill="#0a0a0a"/><rect x="5" y="5" width="1" height="1" fill="#e6e6e6"/><rect x="6" y="5" width="1" height="1" fill="#0a0a0a"/><rect x="9" y="5" width="1" height="1" fill="#e6e6e6"/><rect x="10" y="5" width="1" height="1" fill="#0a0a0a"/><rect x="6" y="6" width="1" height="1" fill="#e6e6e6"/><rect x="7" y="6" width="1" height="1" fill="#0a0a0a"/><rect x="10" y="6" width="1" height="1" fill="#e6e6e6"/><rect x="11" y="6" width="1" height="1" fill="#0a0a0a"/><rect x="7" y="7" width="1" height="1" fill="#e6e6e6"/><rect x="8" y="7" width="1" height="1" fill="#0a0a0a"/><rect x="11" y="7" width="1" height="1" fill="#e6e6e6"/><rect x="8" y="8" width="1" height="1" fill="#e6e6e6"/><rect x="9" y="8" width="1" height="1" fill="#0a0a0a"/><rect x="9" y="9" width="1" height="1" fill="#e6e6e6"/><rect x="10" y="9" width="1" height="1" fill="#0a0a0a"/><rect x="10" y="10" width="1" height="1" fill="#e6e6e6"/><rect x="11" y="10" width="1" height="1" fill="#0a0a0a"/><rect x="11" y="11" width="1" height="1" fill="#e6e6e6"/></svg>
<svg class="a" style="left:5px;top:383px;" width="12" height="12" viewBox="0 0 12 12"><rect x="0" y="0" width="1" height="1" fill="#0a0a0a"/><rect x="0" y="1" width="1" height="1" fill="#e6e6e6"/><rect x="1" y="1" width="1" height="1" fill="#0a0a0a"/><rect x="1" y="2" width="1" height="1" fill="#e6e6e6"/><rect x="2" y="2" width="1" height="1" fill="#0a0a0a"/><rect x="2" y="3" width="1" height="1" fill="#e6e6e6"/><rect x="3" y="3" width="1" height="1" fill="#0a0a0a"/><rect x="0" y="4" width="1" height="1" fill="#0a0a0a"/><rect x="3" y="4" width="1" height="1" fill="#e6e6e6"/><rect x="4" y="4" width="1" height="1" fill="#0a0a0a"/><rect x="0" y="5" width="1" height="1" fill="#e6e6e6"/><rect x="1" y="5" width="1" height="1" fill="#0a0a0a"/><rect x="4" y="5" width="1" height="1" fill="#e6e6e6"/><rect x="5" y="5" width="1" height="1" fill="#0a0a0a"/><rect x="1" y="6" width="1" height="1" fill="#e6e6e6"/><rect x="2" y="6" width="1" height="1" fill="#0a0a0a"/><rect x="5" y="6" width="1" height="1" fill="#e6e6e6"/><rect x="6" y="6" width="1" height="1" fill="#0a0a0a"/><rect x="2" y="7" width="1" height="1" fill="#e6e6e6"/><rect x="3" y="7" width="1" height="1" fill="#0a0a0a"/><rect x="6" y="7" width="1" height="1" fill="#e6e6e6"/><rect x="7" y="7" width="1" height="1" fill="#0a0a0a"/><rect x="0" y="8" width="1" height="1" fill="#0a0a0a"/><rect x="3" y="8" width="1" height="1" fill="#e6e6e6"/><rect x="4" y="8" width="1" height="1" fill="#0a0a0a"/><rect x="7" y="8" width="1" height="1" fill="#e6e6e6"/><rect x="8" y="8" width="1" height="1" fill="#0a0a0a"/><rect x="0" y="9" width="1" height="1" fill="#e6e6e6"/><rect x="1" y="9" width="1" height="1" fill="#0a0a0a"/><rect x="4" y="9" width="1" height="1" fill="#e6e6e6"/><rect x="5" y="9" width="1" height="1" fill="#0a0a0a"/><rect x="8" y="9" width="1" height="1" fill="#e6e6e6"/><rect x="9" y="9" width="1" height="1" fill="#0a0a0a"/><rect x="1" y="10" width="1" height="1" fill="#e6e6e6"/><rect x="2" y="10" width="1" height="1" fill="#0a0a0a"/><rect x="5" y="10" width="1" height="1" fill="#e6e6e6"/><rect x="6" y="10" width="1" height="1" fill="#0a0a0a"/><rect x="9" y="10" width="1" height="1" fill="#e6e6e6"/><rect x="10" y="10" width="1" height="1" fill="#0a0a0a"/><rect x="2" y="11" width="1" height="1" fill="#e6e6e6"/><rect x="3" y="11" width="1" height="1" fill="#0a0a0a"/><rect x="6" y="11" width="1" height="1" fill="#e6e6e6"/><rect x="7" y="11" width="1" height="1" fill="#0a0a0a"/><rect x="10" y="11" width="1" height="1" fill="#e6e6e6"/><rect x="11" y="11" width="1" height="1" fill="#0a0a0a"/></svg>
<div class="a" style="left:355px;top:32px;width:1px;height:363px;background:#000"></div>
<div class="a" style="left:356px;top:32px;width:433px;height:337px;background:#000"></div>
<div class="a" style="left:356px;top:32px;width:433px;height:1px;background:#1c1c1c"></div>
<div class="a" style="left:356px;top:32px;width:1px;height:337px;background:#1c1c1c"></div>
<svg class="a" style="left:781px;top:33px;" width="8" height="12" viewBox="0 0 8 12"><rect x="0" y="0" width="1" height="1" fill="#e6e6e6"/><rect x="1" y="0" width="1" height="1" fill="#0a0a0a"/><rect x="4" y="0" width="1" height="1" fill="#e6e6e6"/><rect x="5" y="0" width="1" height="1" fill="#0a0a0a"/><rect x="1" y="1" width="1" height="1" fill="#e6e6e6"/><rect x="2" y="1" width="1" height="1" fill="#0a0a0a"/><rect x="5" y="1" width="1" height="1" fill="#e6e6e6"/><rect x="6" y="1" width="1" height="1" fill="#0a0a0a"/><rect x="2" y="2" width="1" height="1" fill="#e6e6e6"/><rect x="3" y="2" width="1" height="1" fill="#0a0a0a"/><rect x="6" y="2" width="1" height="1" fill="#e6e6e6"/><rect x="7" y="2" width="1" height="1" fill="#0a0a0a"/><rect x="3" y="3" width="1" height="1" fill="#e6e6e6"/><rect x="4" y="3" width="1" height="1" fill="#0a0a0a"/><rect x="7" y="3" width="1" height="1" fill="#e6e6e6"/><rect x="4" y="4" width="1" height="1" fill="#e6e6e6"/><rect x="5" y="4" width="1" height="1" fill="#0a0a0a"/><rect x="5" y="5" width="1" height="1" fill="#e6e6e6"/><rect x="6" y="5" width="1" height="1" fill="#0a0a0a"/><rect x="6" y="6" width="1" height="1" fill="#e6e6e6"/><rect x="7" y="6" width="1" height="1" fill="#0a0a0a"/><rect x="7" y="7" width="1" height="1" fill="#e6e6e6"/></svg>
<div class="a" style="left:778px;top:54px;width:11px;height:14px;background:#0a0a0a;border-radius:3px 0 0 3px"></div>
<svg class="a" style="left:781px;top:57px;" width="8" height="8" viewBox="0 0 8 8"><path d="M4 1v6M1 4h6" stroke="#777" stroke-width="2"/></svg>
<div class="a" style="left:356px;top:369px;width:433px;height:26px;background:#6a6a6a;border-top:1px solid #767676"></div>
<div class="a" style="left:5px;top:395px;width:784px;height:1px;background:#000"></div>
<svg class="a" style="left:356px;top:383px;" width="12" height="12" viewBox="0 0 12 12"><rect x="0" y="0" width="1" height="1" fill="#0a0a0a"/><rect x="0" y="1" width="1" height="1" fill="#e6e6e6"/><rect x="1" y="1" width="1" height="1" fill="#0a0a0a"/><rect x="1" y="2" width="1" height="1" fill="#e6e6e6"/><rect x="2" y="2" width="1" height="1" fill="#0a0a0a"/><rect x="2" y="3" width="1" height="1" fill="#e6e6e6"/><rect x="3" y="3" width="1" height="1" fill="#0a0a0a"/><rect x="0" y="4" width="1" height="1" fill="#0a0a0a"/><rect x="3" y="4" width="1" height="1" fill="#e6e6e6"/><rect x="4" y="4" width="1" height="1" fill="#0a0a0a"/><rect x="0" y="5" width="1" height="1" fill="#e6e6e6"/><rect x="1" y="5" width="1" height="1" fill="#0a0a0a"/><rect x="4" y="5" width="1" height="1" fill="#e6e6e6"/><rect x="5" y="5" width="1" height="1" fill="#0a0a0a"/><rect x="1" y="6" width="1" height="1" fill="#e6e6e6"/><rect x="2" y="6" width="1" height="1" fill="#0a0a0a"/><rect x="5" y="6" width="1" height="1" fill="#e6e6e6"/><rect x="6" y="6" width="1" height="1" fill="#0a0a0a"/><rect x="2" y="7" width="1" height="1" fill="#e6e6e6"/><rect x="3" y="7" width="1" height="1" fill="#0a0a0a"/><rect x="6" y="7" width="1" height="1" fill="#e6e6e6"/><rect x="7" y="7" width="1" height="1" fill="#0a0a0a"/><rect x="0" y="8" width="1" height="1" fill="#0a0a0a"/><rect x="3" y="8" width="1" height="1" fill="#e6e6e6"/><rect x="4" y="8" width="1" height="1" fill="#0a0a0a"/><rect x="7" y="8" width="1" height="1" fill="#e6e6e6"/><rect x="8" y="8" width="1" height="1" fill="#0a0a0a"/><rect x="0" y="9" width="1" height="1" fill="#e6e6e6"/><rect x="1" y="9" width="1" height="1" fill="#0a0a0a"/><rect x="4" y="9" width="1" height="1" fill="#e6e6e6"/><rect x="5" y="9" width="1" height="1" fill="#0a0a0a"/><rect x="8" y="9" width="1" height="1" fill="#e6e6e6"/><rect x="9" y="9" width="1" height="1" fill="#0a0a0a"/><rect x="1" y="10" width="1" height="1" fill="#e6e6e6"/><rect x="2" y="10" width="1" height="1" fill="#0a0a0a"/><rect x="5" y="10" width="1" height="1" fill="#e6e6e6"/><rect x="6" y="10" width="1" height="1" fill="#0a0a0a"/><rect x="9" y="10" width="1" height="1" fill="#e6e6e6"/><rect x="10" y="10" width="1" height="1" fill="#0a0a0a"/><rect x="2" y="11" width="1" height="1" fill="#e6e6e6"/><rect x="3" y="11" width="1" height="1" fill="#0a0a0a"/><rect x="6" y="11" width="1" height="1" fill="#e6e6e6"/><rect x="7" y="11" width="1" height="1" fill="#0a0a0a"/><rect x="10" y="11" width="1" height="1" fill="#e6e6e6"/><rect x="11" y="11" width="1" height="1" fill="#0a0a0a"/></svg>
<div class="a" style="left:365px;top:372px;width:32px;height:20px;background:#454545;border:1px solid #262626;border-radius:5px"></div>
<svg class="a" style="left:369px;top:374px;" width="17" height="17" viewBox="0 0 17 17"><rect x="7.5" y="1" width="8" height="7" fill="#3a5a90" stroke="#0a0a0a" stroke-width="0.9"/><path d="M9 3.5h2v3H9zM12 3.5h2v3h-2z" fill="#8aa0c0"/><path d="M8.6 2h.8M10.4 2h.8M12.2 2h.8M14 2h.8" stroke="#fff" stroke-width="0.9"/><path d="M8.5 1.5q-2 2 0 4t1.5 3" fill="none" stroke="#0a0a0a" stroke-width="2"/><path d="M8.5 1.5q-2 2 0 4t1.5 3" fill="none" stroke="#e8e8e8" stroke-width="0.9"/><rect x="1" y="8" width="10" height="7" fill="#2a5598" stroke="#0a0a0a" stroke-width="0.9"/><path d="M2 9.8h2.2v2.8H2zM5 9.8h2.2v2.8H5zM8 9.8h2.2v2.8H8z" fill="#fff"/><path d="M1.8 8.8h.9M3.6 8.8h.9M5.4 8.8h.9M7.2 8.8h.9M9 8.8h.9M1.8 14.2h.9M3.6 14.2h.9M5.4 14.2h.9M7.2 14.2h.9M9 14.2h.9" stroke="#fff" stroke-width="0.9"/></svg>
<svg class="a" style="left:386px;top:375px;" width="8" height="14" viewBox="0 0 8 14"><path d="M4 0.5L7.5 5.5H0.5Z" fill="#a9a9a9"/><path d="M4 13.5L7.5 8.5H0.5Z" fill="#a9a9a9"/></svg>
<div class="a" style="left:402px;top:369px;width:40px;height:23px;background:linear-gradient(#6a94d4,#5680c2);border-radius:0 0 5px 5px"></div>
<div class="t" style="left:409px;top:377.8px;font-size:11px;color:#000;">View</div>
<div class="a" style="left:447px;top:372px;width:41px;height:20px;border:1px solid #262626;border-radius:5px;overflow:hidden"><div class="a" style="left:0px;top:0;width:19px;height:18px;background:linear-gradient(#a9a9a9,#8d8d8d)"></div><div class="a" style="left:19px;top:0;width:1px;height:18px;background:#262626"></div><div class="a" style="left:20px;top:0;width:19px;height:18px;background:linear-gradient(#a9a9a9,#8d8d8d)"></div></div>
<svg class="a" style="left:449px;top:374px;" width="16" height="16" viewBox="0 0 16 16"><circle cx="8" cy="8" r="6.5" fill="#eee" stroke="#111"/><path d="M8 8V1.5A6.5 6.5 0 0 1 14.5 8Z" fill="#f0a020"/><path d="M8 8H14.5M8 8V1.5" stroke="#222" stroke-width="0.9"/><path d="M8 8L10.8 10.8" stroke="#d22" stroke-width="1.4"/><circle cx="8" cy="8" r="6.5" fill="none" stroke="#111"/></svg>
<svg class="a" style="left:468px;top:374px;" width="16" height="16" viewBox="0 0 16 16"><path d="M5.5 7.5V5.2a3 3 0 0 1 6 0v2.3" fill="none" stroke="#111" stroke-width="2.6"/><path d="M5.5 7.5V5.2a3 3 0 0 1 6 0v2.3" fill="none" stroke="#e8e8e8" stroke-width="1.1"/><rect x="3.5" y="7.5" width="10" height="7" fill="#eee" stroke="#111" stroke-width="1.1"/><path d="M4.5 10h8M4.5 12.5h8" stroke="#b8c0c8" stroke-width="0.6"/><rect x="8" y="10" width="1.2" height="2.4" fill="#222"/></svg>
<div class="a" style="left:492px;top:372px;width:60px;height:20px;border:1px solid #262626;border-radius:5px;overflow:hidden"><div class="a" style="left:0px;top:0;width:18px;height:18px;background:linear-gradient(#4b4b4b,#3e3e3e)"></div><div class="a" style="left:18px;top:0;width:1px;height:18px;background:#262626"></div><div class="a" style="left:19px;top:0;width:19px;height:18px;background:linear-gradient(#6a94d4,#4f78b8)"></div><div class="a" style="left:38px;top:0;width:1px;height:18px;background:#262626"></div><div class="a" style="left:39px;top:0;width:19px;height:18px;background:linear-gradient(#4b4b4b,#3e3e3e)"></div></div>
<svg class="a" style="left:494px;top:374px;" width="16" height="16" viewBox="0 0 16 16"><path d="M2 3.5h7M5 6.5h9M1 10h8M7 13h7" stroke="#aaa" stroke-width="1.8"/></svg>
<svg class="a" style="left:513px;top:374px;" width="16" height="16" viewBox="0 0 16 16"><rect x="1.5" y="1.5" width="13" height="13" fill="#eee" stroke="#222" stroke-width="0.8"/><path d="M2 2h3v3H2zM8 2h3v3H8zM5 5h3v3H5zM11 5h3v3h-3zM2 8h3v3H2zM8 8h3v3H8zM5 11h3v3H5zM11 11h3v3h-3z" fill="#8a1a1a"/></svg>
<svg class="a" style="left:533px;top:374px;" width="16" height="16" viewBox="0 0 16 16"><path d="M5 2.5h7M8 5.5h6" stroke="#aaa" stroke-width="1.8"/><rect x="1.5" y="7.5" width="7" height="7" fill="#ddd" stroke="#222" stroke-width="0.6"/><path d="M2 8h2v2H2zM6 8h2v2H6zM4 10h2v2H4zM2 12h2v2H2zM6 12h2v2H6z" fill="#8a1a1a"/><path d="M10 11h4" stroke="#aaa" stroke-width="1.8"/></svg>
<div class="a" style="left:557px;top:372px;width:80px;height:20px;border:1px solid #262626;border-radius:5px;overflow:hidden"><div class="a" style="left:0px;top:0;width:18px;height:18px;background:linear-gradient(#6a94d4,#4f78b8)"></div><div class="a" style="left:18px;top:0;width:1px;height:18px;background:#262626"></div><div class="a" style="left:19px;top:0;width:19px;height:18px;background:linear-gradient(#4b4b4b,#3e3e3e)"></div><div class="a" style="left:38px;top:0;width:1px;height:18px;background:#262626"></div><div class="a" style="left:39px;top:0;width:19px;height:18px;background:linear-gradient(#4b4b4b,#3e3e3e)"></div><div class="a" style="left:58px;top:0;width:1px;height:18px;background:#262626"></div><div class="a" style="left:59px;top:0;width:19px;height:18px;background:linear-gradient(#4b4b4b,#3e3e3e)"></div></div>
<svg class="a" style="left:559px;top:374px;" width="16" height="16" viewBox="0 0 16 16"><rect x="1.5" y="1.5" width="13" height="13" fill="#eee" stroke="#222" stroke-width="0.8"/><path d="M2 2h3v3H2zM8 2h3v3H8zM5 5h3v3H5zM11 5h3v3h-3zM2 8h3v3H2zM8 8h3v3H8zM5 11h3v3H5zM11 11h3v3h-3z" fill="#8a1a1a"/></svg>
<svg class="a" style="left:578px;top:374px;" width="16" height="16" viewBox="0 0 16 16"><rect x="1.5" y="1.5" width="13" height="13" fill="#3a3a3a" stroke="#222"/><path d="M3 4l2 1M6 7l2 2M9 10l3 2" stroke="#bbb" stroke-width="1"/></svg>
<svg class="a" style="left:598px;top:374px;" width="16" height="16" viewBox="0 0 16 16"><rect x="1.5" y="1.5" width="13" height="13" fill="#3a3a3a" stroke="#222"/><path d="M8 3.5L12 5.8V10.2L8 12.5L4 10.2V5.8Z" fill="none" stroke="#e8a040" stroke-width="1.3"/><path d="M4 10.2L8 12.5L12 10.2" fill="none" stroke="#40a0e0" stroke-width="1.3"/><path d="M4 5.8V10.2" stroke="#50c050" stroke-width="1.3"/></svg>
<svg class="a" style="left:618px;top:374px;" width="16" height="16" viewBox="0 0 16 16"><rect x="1.5" y="1.5" width="13" height="13" fill="#3a3a3a" stroke="#222"/><path d="M2 14V11l2-2 1 1 2-4 1 2 1-3 1 2 1-4 1 5 1 2 1 1V14Z" fill="#999"/></svg>
<div class="a" style="left:642px;top:372px;width:40px;height:20px;border:1px solid #262626;border-radius:5px;overflow:hidden"><div class="a" style="left:0px;top:0;width:18px;height:18px;background:linear-gradient(#6a94d4,#4f78b8)"></div><div class="a" style="left:18px;top:0;width:1px;height:18px;background:#262626"></div><div class="a" style="left:19px;top:0;width:19px;height:18px;background:linear-gradient(#4b4b4b,#3e3e3e)"></div></div>
<svg class="a" style="left:644px;top:374px;" width="16" height="16" viewBox="0 0 16 16"><rect x="1.5" y="1.5" width="13" height="13" fill="#7a9ad0" stroke="#111"/><path d="M1.5 1.5H14.5L1.5 14.5Z" fill="#eee"/><path d="M3 3h2.5v2.5H3zM8 3h2.5v2.5H8zM5.5 5.5h2.5v2.5H5.5z" fill="#c02040"/><path d="M3 8h2.5v2.5H3z" fill="#e08020"/><path d="M2 3h2v2H2z" fill="#2080c0"/><path d="M14.5 1.5L1.5 14.5" stroke="#111" stroke-width="1.2"/></svg>
<svg class="a" style="left:663px;top:374px;opacity:0.75" width="16" height="16" viewBox="0 0 16 16"><rect x="1.5" y="1.5" width="13" height="13" fill="#ddd" stroke="#222" stroke-width="0.6"/><path d="M2 2h3v3H2zM8 2h3v3H8zM5 5h3v3H5zM11 5h3v3h-3zM5 11h3v3H5z" fill="#b03050"/><path d="M2 8h3v3H2z" fill="#d08030"/><path d="M11 11h3v3h-3z" fill="#80a040"/><path d="M11 2h3v3h-3z" fill="#40a0a0"/></svg>
<div class="a" style="left:687px;top:372px;width:110px;height:20px;background:linear-gradient(#a5a5a5,#b8b8b8);border:1px solid #1c1c1c;border-radius:10px 0 0 10px"></div>
<svg class="a" style="left:693px;top:378px;" width="4" height="8" viewBox="0 0 4 8"><path d="M3.8 0.2v7.6L0.2 4Z" fill="#747474"/></svg>
<div class="t" style="left:704px;top:378.2px;font-size:11px;color:#000;">Channel:</div>
<div class="a" style="left:399px;top:368px;width:242px;height:6px;background:linear-gradient(rgba(0,0,0,0.55),rgba(0,0,0,0));border-radius:0 0 4px 4px"></div>
<div class="a" style="left:403px;top:47px;width:234px;height:322px;background:#191919;border-radius:4px 4px 0 0"></div>
<div class="a" style="left:403px;top:93px;width:234px;height:18px;background:linear-gradient(#7ca4e4,#5680c2)"></div>
<div class="t" style="left:432px;top:57.9px;font-size:11px;color:#fff;">Toggle Fullscreen Area</div>
<div class="t" style="right:157.2px;top:57.9px;font-size:11px;color:#fff;">Alt F<span class="d">1</span><span class="d">0</span></div>
<div class="a" style="left:521px;top:68.7px;width:7px;height:1px;background:#fff;opacity:0.8"></div>
<div class="t" style="left:432px;top:78.2px;font-size:11px;color:#fff;">Toggle Maximize Area</div>
<div class="t" style="right:158.0px;top:78.2px;font-size:11px;color:#fff;">Ctrl Up Arrow</div>
<div class="a" style="left:432px;top:89px;width:6px;height:1px;background:#fff;opacity:0.8"></div>
<div class="t" style="left:432px;top:98.5px;font-size:11px;color:#000;">Duplicate Area into New Window</div>
<div class="a" style="left:432px;top:109.3px;width:7px;height:1px;background:#000;opacity:0.8"></div>
<div class="a" style="left:403px;top:117px;width:234px;height:1px;background:#2e2e2e"></div>
<div class="a" style="left:415px;top:127px;width:10px;height:9px;background:linear-gradient(#585858,#444);border:1px solid #2a2a2a"></div>
<div class="t" style="left:432px;top:127.1px;font-size:11px;color:#fff;">Show Metadata</div>
<div class="a" style="left:415px;top:147px;width:10px;height:9px;background:linear-gradient(#585858,#444);border:1px solid #2a2a2a"></div>
<div class="t" style="left:432px;top:147.0px;font-size:11px;color:#fff;">Safe Areas</div>
<div class="a" style="left:403px;top:166px;width:234px;height:1px;background:#2e2e2e"></div>
<div class="t" style="left:432px;top:175.7px;font-size:11px;color:#fff;">Zoom <span class="d">8</span>:<span class="d">1</span></div>
<div class="t" style="left:432px;top:196.1px;font-size:11px;color:#fff;">Zoom <span class="d">4</span>:<span class="d">1</span></div>
<div class="t" style="left:432px;top:216.2px;font-size:11px;color:#fff;">Zoom <span class="d">2</span>:<span class="d">1</span></div>
<div class="t" style="left:432px;top:236.2px;font-size:11px;color:#fff;">Zoom <span class="d">1</span>:<span class="d">1</span></div>
<div class="t" style="right:157.2px;top:236.2px;font-size:11px;color:#fff;">Numpad <span class="d">1</span></div>
<div class="t" style="left:432px;top:256.2px;font-size:11px;color:#fff;">Zoom <span class="d">1</span>:<span class="d">2</span></div>
<div class="a" style="left:452px;top:267px;width:7px;height:1px;background:#fff;opacity:0.8"></div>
<div class="t" style="left:432px;top:276.2px;font-size:11px;color:#fff;">Zoom <span class="d">1</span>:<span class="d">4</span></div>
<div class="a" style="left:439px;top:287px;width:6px;height:1px;background:#fff;opacity:0.8"></div>
<div class="t" style="left:432px;top:295.8px;font-size:11px;color:#fff;">Zoom <span class="d">1</span>:<span class="d">8</span></div>
<div class="a" style="left:432px;top:306.6px;width:7px;height:1px;background:#fff;opacity:0.8"></div>
<div class="a" style="left:403px;top:315px;width:234px;height:1px;background:#2e2e2e"></div>
<div class="t" style="left:432px;top:325.2px;font-size:11px;color:#fff;">Fit preview in window</div>
<div class="t" style="right:158.0px;top:325.2px;font-size:11px;color:#fff;">Home</div>
<div class="a" style="left:432px;top:336px;width:5px;height:1px;background:#fff;opacity:0.8"></div>
<div class="a" style="left:403px;top:344px;width:234px;height:1px;background:#2e2e2e"></div>
<div class="a" style="left:415px;top:354px;width:10px;height:9px;background:linear-gradient(#ddd,#999);border:1px solid #222"></div>
<div class="t" style="left:432px;top:354.1px;font-size:11px;color:#fff;">Properties</div>
<div class="t" style="right:158.0px;top:354.1px;font-size:11px;color:#fff;">N</div>
<div class="a" style="left:432px;top:364.9px;width:6px;height:1px;background:#fff;opacity:0.8"></div>
<div class="a" style="left:5px;top:396px;width:784px;height:256px;background:#747474"></div>
<div class="a" style="left:22px;top:396px;width:551px;height:239px;background:#666"></div>
<div class="a" style="left:22px;top:425px;width:551px;height:30px;background:#5a5a5a"></div>
<div class="a" style="left:22px;top:485px;width:551px;height:29px;background:#5a5a5a"></div>
<div class="a" style="left:22px;top:544px;width:551px;height:30px;background:#5a5a5a"></div>
<div class="a" style="left:22px;top:604px;width:551px;height:31px;background:#5a5a5a"></div>
<div class="a" style="left:22px;top:425px;width:551px;height:1px;background:#3f3f3f"></div>
<div class="a" style="left:22px;top:455px;width:551px;height:1px;background:#3f3f3f"></div>
<div class="a" style="left:22px;top:485px;width:551px;height:1px;background:#3f3f3f"></div>
<div class="a" style="left:22px;top:514px;width:551px;height:1px;background:#3f3f3f"></div>
<div class="a" style="left:22px;top:544px;width:551px;height:1px;background:#3f3f3f"></div>
<div class="a" style="left:22px;top:574px;width:551px;height:1px;background:#3f3f3f"></div>
<div class="a" style="left:22px;top:604px;width:551px;height:1px;background:#3f3f3f"></div>
<div class="a" style="left:5px;top:396px;width:784px;height:1px;background:#7a7a7a"></div>
<div class="a" style="left:77px;top:396px;width:1px;height:239px;background:#676767"></div>
<div class="a" style="left:132px;top:396px;width:1px;height:239px;background:#676767"></div>
<div class="a" style="left:187px;top:396px;width:1px;height:239px;background:#676767"></div>
<div class="a" style="left:242px;top:396px;width:1px;height:239px;background:#676767"></div>
<div class="a" style="left:297px;top:396px;width:1px;height:239px;background:#676767"></div>
<div class="a" style="left:352px;top:396px;width:1px;height:239px;background:#676767"></div>
<div class="a" style="left:407px;top:396px;width:1px;height:239px;background:#676767"></div>
<div class="a" style="left:462px;top:396px;width:1px;height:239px;background:#676767"></div>
<div class="a" style="left:517px;top:396px;width:1px;height:239px;background:#676767"></div>
<div class="a" style="left:572px;top:396px;width:1px;height:239px;background:#676767"></div>
<div class="a" style="left:572px;top:396px;width:1px;height:256px;background:#5c5c5c"></div>
<div class="a" style="left:573px;top:396px;width:1px;height:256px;background:#848484"></div>
<div class="a" style="left:22px;top:396px;width:1px;height:239px;background:#6a6a6a"></div>
<div class="a" style="left:22px;top:635px;width:551px;height:17px;background:#6e6e6e"></div>
<div class="a" style="left:24px;top:396px;width:2px;height:239px;background:#5fcb3c"></div>
<div class="a" style="left:24px;top:619px;width:42px;height:16px;background:#5fcb3c"></div>
<div class="t" style="left:33px;top:622.2px;font-size:11px;color:#000;"><span class="d">0</span>+<span class="d">0</span><span class="d">1</span></div>
<div class="a" style="left:9px;top:401px;width:13px;height:229px;background:linear-gradient(90deg,#a9a9a9,#8f8f8f);border:1px solid #3a3a3a;border-radius:7px"></div>
<div class="a" style="left:11px;top:403px;width:8px;height:8px;background:#7e7e7e;border-radius:50%"></div>
<div class="a" style="left:11px;top:618px;width:8px;height:8px;background:#7e7e7e;border-radius:50%"></div>
<div class="t" style="left:10px;top:420.8px;width:12px;height:11px;text-align:center;font-size:11px;transform:rotate(-90deg)">6</div>
<div class="t" style="left:10px;top:477.3px;width:12px;height:11px;text-align:center;font-size:11px;transform:rotate(-90deg)">4</div>
<div class="t" style="left:10px;top:534.8px;width:12px;height:11px;text-align:center;font-size:11px;transform:rotate(-90deg)">2</div>
<div class="t" style="left:10px;top:591.5px;width:12px;height:11px;text-align:center;font-size:11px;transform:rotate(-90deg)">0</div>
<div class="a" style="left:27px;top:635px;width:541px;height:13px;background:linear-gradient(#a9a9a9,#8f8f8f);border:1px solid #3a3a3a;border-radius:7px"></div>
<div class="a" style="left:29px;top:637px;width:9px;height:9px;background:#7e7e7e;border-radius:50%"></div>
<div class="a" style="left:556px;top:637px;width:9px;height:9px;background:#7e7e7e;border-radius:50%"></div>
<div class="t" style="left:-21.0px;width:200px;text-align:center;top:637.0px;font-size:11px;color:#000;"><span class="d">0</span><span class="d">0</span>:<span class="d">0</span><span class="d">1</span></div>
<div class="t" style="left:30.900000000000006px;width:200px;text-align:center;top:637.0px;font-size:11px;color:#000;"><span class="d">0</span><span class="d">0</span>:<span class="d">0</span><span class="d">2</span></div>
<div class="t" style="left:82.80000000000001px;width:200px;text-align:center;top:637.0px;font-size:11px;color:#000;"><span class="d">0</span><span class="d">0</span>:<span class="d">0</span><span class="d">3</span></div>
<div class="t" style="left:134.7px;width:200px;text-align:center;top:637.0px;font-size:11px;color:#000;"><span class="d">0</span><span class="d">0</span>:<span class="d">0</span><span class="d">4</span></div>
<div class="t" style="left:186.60000000000002px;width:200px;text-align:center;top:637.0px;font-size:11px;color:#000;"><span class="d">0</span><span class="d">0</span>:<span class="d">0</span><span class="d">5</span></div>
<div class="t" style="left:238.5px;width:200px;text-align:center;top:637.0px;font-size:11px;color:#000;"><span class="d">0</span><span class="d">0</span>:<span class="d">0</span><span class="d">6</span></div>
<div class="t" style="left:290.4px;width:200px;text-align:center;top:637.0px;font-size:11px;color:#000;"><span class="d">0</span><span class="d">0</span>:<span class="d">0</span><span class="d">7</span></div>
<div class="t" style="left:342.3px;width:200px;text-align:center;top:637.0px;font-size:11px;color:#000;"><span class="d">0</span><span class="d">0</span>:<span class="d">0</span><span class="d">8</span></div>
<div class="t" style="left:394.2px;width:200px;text-align:center;top:637.0px;font-size:11px;color:#000;"><span class="d">0</span><span class="d">0</span>:<span class="d">0</span><span class="d">9</span></div>
<div class="t" style="left:446.0999999999999px;width:200px;text-align:center;top:637.0px;font-size:11px;color:#000;"><span class="d">0</span><span class="d">0</span>:<span class="d">1</span><span class="d">0</span></div>
<div class="a" style="left:776px;top:401px;width:13px;height:246px;background:#666;border-radius:6px"></div>
<div class="a" style="left:777px;top:402px;width:11px;height:184px;background:linear-gradient(90deg,#a5a5a5,#8d8d8d);border-radius:5px"></div>
<svg class="a" style="left:781px;top:397px;" width="8" height="12" viewBox="0 0 8 12"><rect x="0" y="0" width="1" height="1" fill="#e6e6e6"/><rect x="1" y="0" width="1" height="1" fill="#0a0a0a"/><rect x="4" y="0" width="1" height="1" fill="#e6e6e6"/><rect x="5" y="0" width="1" height="1" fill="#0a0a0a"/><rect x="1" y="1" width="1" height="1" fill="#e6e6e6"/><rect x="2" y="1" width="1" height="1" fill="#0a0a0a"/><rect x="5" y="1" width="1" height="1" fill="#e6e6e6"/><rect x="6" y="1" width="1" height="1" fill="#0a0a0a"/><rect x="2" y="2" width="1" height="1" fill="#e6e6e6"/><rect x="3" y="2" width="1" height="1" fill="#0a0a0a"/><rect x="6" y="2" width="1" height="1" fill="#e6e6e6"/><rect x="7" y="2" width="1" height="1" fill="#0a0a0a"/><rect x="3" y="3" width="1" height="1" fill="#e6e6e6"/><rect x="4" y="3" width="1" height="1" fill="#0a0a0a"/><rect x="7" y="3" width="1" height="1" fill="#e6e6e6"/><rect x="4" y="4" width="1" height="1" fill="#e6e6e6"/><rect x="5" y="4" width="1" height="1" fill="#0a0a0a"/><rect x="5" y="5" width="1" height="1" fill="#e6e6e6"/><rect x="6" y="5" width="1" height="1" fill="#0a0a0a"/><rect x="6" y="6" width="1" height="1" fill="#e6e6e6"/><rect x="7" y="6" width="1" height="1" fill="#0a0a0a"/><rect x="7" y="7" width="1" height="1" fill="#e6e6e6"/></svg>
<div class="a" style="left:5px;top:652px;width:784px;height:26px;background:#6a6a6a;border-top:1px solid #767676"></div>
<div class="a" style="left:5px;top:678px;width:784px;height:1px;background:#000"></div>
<svg class="a" style="left:5px;top:666px;" width="12" height="12" viewBox="0 0 12 12"><rect x="0" y="0" width="1" height="1" fill="#0a0a0a"/><rect x="0" y="1" width="1" height="1" fill="#e6e6e6"/><rect x="1" y="1" width="1" height="1" fill="#0a0a0a"/><rect x="1" y="2" width="1" height="1" fill="#e6e6e6"/><rect x="2" y="2" width="1" height="1" fill="#0a0a0a"/><rect x="2" y="3" width="1" height="1" fill="#e6e6e6"/><rect x="3" y="3" width="1" height="1" fill="#0a0a0a"/><rect x="0" y="4" width="1" height="1" fill="#0a0a0a"/><rect x="3" y="4" width="1" height="1" fill="#e6e6e6"/><rect x="4" y="4" width="1" height="1" fill="#0a0a0a"/><rect x="0" y="5" width="1" height="1" fill="#e6e6e6"/><rect x="1" y="5" width="1" height="1" fill="#0a0a0a"/><rect x="4" y="5" width="1" height="1" fill="#e6e6e6"/><rect x="5" y="5" width="1" height="1" fill="#0a0a0a"/><rect x="1" y="6" width="1" height="1" fill="#e6e6e6"/><rect x="2" y="6" width="1" height="1" fill="#0a0a0a"/><rect x="5" y="6" width="1" height="1" fill="#e6e6e6"/><rect x="6" y="6" width="1" height="1" fill="#0a0a0a"/><rect x="2" y="7" width="1" height="1" fill="#e6e6e6"/><rect x="3" y="7" width="1" height="1" fill="#0a0a0a"/><rect x="6" y="7" width="1" height="1" fill="#e6e6e6"/><rect x="7" y="7" width="1" height="1" fill="#0a0a0a"/><rect x="0" y="8" width="1" height="1" fill="#0a0a0a"/><rect x="3" y="8" width="1" height="1" fill="#e6e6e6"/><rect x="4" y="8" width="1" height="1" fill="#0a0a0a"/><rect x="7" y="8" width="1" height="1" fill="#e6e6e6"/><rect x="8" y="8" width="1" height="1" fill="#0a0a0a"/><rect x="0" y="9" width="1" height="1" fill="#e6e6e6"/><rect x="1" y="9" width="1" height="1" fill="#0a0a0a"/><rect x="4" y="9" width="1" height="1" fill="#e6e6e6"/><rect x="5" y="9" width="1" height="1" fill="#0a0a0a"/><rect x="8" y="9" width="1" height="1" fill="#e6e6e6"/><rect x="9" y="9" width="1" height="1" fill="#0a0a0a"/><rect x="1" y="10" width="1" height="1" fill="#e6e6e6"/><rect x="2" y="10" width="1" height="1" fill="#0a0a0a"/><rect x="5" y="10" width="1" height="1" fill="#e6e6e6"/><rect x="6" y="10" width="1" height="1" fill="#0a0a0a"/><rect x="9" y="10" width="1" height="1" fill="#e6e6e6"/><rect x="10" y="10" width="1" height="1" fill="#0a0a0a"/><rect x="2" y="11" width="1" height="1" fill="#e6e6e6"/><rect x="3" y="11" width="1" height="1" fill="#0a0a0a"/><rect x="6" y="11" width="1" height="1" fill="#e6e6e6"/><rect x="7" y="11" width="1" height="1" fill="#0a0a0a"/><rect x="10" y="11" width="1" height="1" fill="#e6e6e6"/><rect x="11" y="11" width="1" height="1" fill="#0a0a0a"/></svg>
<div class="a" style="left:14px;top:655px;width:32px;height:20px;background:#454545;border:1px solid #262626;border-radius:5px"></div>
<svg class="a" style="left:18px;top:657px;" width="17" height="17" viewBox="0 0 17 17"><rect x="7.5" y="1" width="8" height="7" fill="#3a5a90" stroke="#0a0a0a" stroke-width="0.9"/><path d="M9 3.5h2v3H9zM12 3.5h2v3h-2z" fill="#8aa0c0"/><path d="M8.6 2h.8M10.4 2h.8M12.2 2h.8M14 2h.8" stroke="#fff" stroke-width="0.9"/><path d="M8.5 1.5q-2 2 0 4t1.5 3" fill="none" stroke="#0a0a0a" stroke-width="2"/><path d="M8.5 1.5q-2 2 0 4t1.5 3" fill="none" stroke="#e8e8e8" stroke-width="0.9"/><rect x="1" y="8" width="10" height="7" fill="#2a5598" stroke="#0a0a0a" stroke-width="0.9"/><path d="M2 9.8h2.2v2.8H2zM5 9.8h2.2v2.8H5zM8 9.8h2.2v2.8H8z" fill="#fff"/><path d="M1.8 8.8h.9M3.6 8.8h.9M5.4 8.8h.9M7.2 8.8h.9M9 8.8h.9M1.8 14.2h.9M3.6 14.2h.9M5.4 14.2h.9M7.2 14.2h.9M9 14.2h.9" stroke="#fff" stroke-width="0.9"/></svg>
<svg class="a" style="left:35px;top:658px;" width="8" height="14" viewBox="0 0 8 14"><path d="M4 0.5L7.5 5.5H0.5Z" fill="#a9a9a9"/><path d="M4 13.5L7.5 8.5H0.5Z" fill="#a9a9a9"/></svg>
<div class="t" style="left:58px;top:661.1px;font-size:11px;color:#000;">View</div>
<div class="t" style="left:103.3px;top:661.1px;font-size:11px;color:#000;">Select</div>
<div class="t" style="left:154.6px;top:661.1px;font-size:11px;color:#000;">Marker</div>
<div class="t" style="left:209.3px;top:661.1px;font-size:11px;color:#000;">Add</div>
<div class="t" style="left:248.4px;top:661.1px;font-size:11px;color:#000;">Frame</div>
<div class="t" style="left:300.5px;top:661.1px;font-size:11px;color:#000;">Strip</div>
<div class="a" style="left:336px;top:655px;width:40px;height:20px;border:1px solid #262626;border-radius:5px;overflow:hidden"><div class="a" style="left:0px;top:0;width:18px;height:18px;background:linear-gradient(#a9a9a9,#8d8d8d)"></div><div class="a" style="left:18px;top:0;width:1px;height:18px;background:#262626"></div><div class="a" style="left:19px;top:0;width:19px;height:18px;background:linear-gradient(#a9a9a9,#8d8d8d)"></div></div>
<svg class="a" style="left:338px;top:657px;" width="16" height="16" viewBox="0 0 16 16"><circle cx="8" cy="8" r="6.5" fill="#eee" stroke="#111"/><path d="M8 8V1.5A6.5 6.5 0 0 1 14.5 8Z" fill="#f0a020"/><path d="M8 8H14.5M8 8V1.5" stroke="#222" stroke-width="0.9"/><path d="M8 8L10.8 10.8" stroke="#d22" stroke-width="1.4"/><circle cx="8" cy="8" r="6.5" fill="none" stroke="#111"/></svg>
<svg class="a" style="left:357px;top:657px;" width="16" height="16" viewBox="0 0 16 16"><path d="M5.5 7.5V5.2a3 3 0 0 1 6 0v2.3" fill="none" stroke="#111" stroke-width="2.6"/><path d="M5.5 7.5V5.2a3 3 0 0 1 6 0v2.3" fill="none" stroke="#e8e8e8" stroke-width="1.1"/><rect x="3.5" y="7.5" width="10" height="7" fill="#eee" stroke="#111" stroke-width="1.1"/><path d="M4.5 10h8M4.5 12.5h8" stroke="#b8c0c8" stroke-width="0.6"/><rect x="8" y="10" width="1.2" height="2.4" fill="#222"/></svg>
<div class="a" style="left:381px;top:655px;width:60px;height:20px;border:1px solid #262626;border-radius:5px;overflow:hidden"><div class="a" style="left:0px;top:0;width:18px;height:18px;background:linear-gradient(#6a94d4,#4f78b8)"></div><div class="a" style="left:18px;top:0;width:1px;height:18px;background:#262626"></div><div class="a" style="left:19px;top:0;width:19px;height:18px;background:linear-gradient(#4b4b4b,#3e3e3e)"></div><div class="a" style="left:38px;top:0;width:1px;height:18px;background:#262626"></div><div class="a" style="left:39px;top:0;width:19px;height:18px;background:linear-gradient(#4b4b4b,#3e3e3e)"></div></div>
<svg class="a" style="left:383px;top:657px;" width="16" height="16" viewBox="0 0 16 16"><path d="M2 3h6M5 6.5h8M1.5 10.5h7M7 13.5h7" stroke="#111" stroke-width="2.8"/><path d="M2.5 3h5M5.5 6.5h7M2 10.5h6M7.5 13.5h6" stroke="#fff" stroke-width="1.6"/></svg>
<svg class="a" style="left:402px;top:657px;" width="16" height="16" viewBox="0 0 16 16"><rect x="1.5" y="1.5" width="13" height="13" fill="#bdbdbd" stroke="#333" stroke-width="0.8"/><path d="M2 2h3v3H2zM8 2h3v3H8zM5 5h3v3H5zM11 5h3v3h-3zM2 8h3v3H2zM8 8h3v3H8zM5 11h3v3H5zM11 11h3v3h-3z" fill="#7a2a2a"/></svg>
<svg class="a" style="left:422px;top:657px;" width="16" height="16" viewBox="0 0 16 16"><path d="M5 2.5h7M8 5.5h6" stroke="#aaa" stroke-width="1.8"/><rect x="1.5" y="7.5" width="7" height="7" fill="#ddd" stroke="#222" stroke-width="0.6"/><path d="M2 8h2v2H2zM6 8h2v2H6zM4 10h2v2H4zM2 12h2v2H2zM6 12h2v2H6z" fill="#8a1a1a"/><path d="M10 11h4" stroke="#aaa" stroke-width="1.8"/></svg>
<div class="a" style="left:446px;top:655px;width:41px;height:20px;border:1px solid #262626;border-radius:5px;overflow:hidden"><div class="a" style="left:0px;top:0;width:19px;height:18px;background:linear-gradient(#a9a9a9,#8d8d8d)"></div><div class="a" style="left:19px;top:0;width:1px;height:18px;background:#262626"></div><div class="a" style="left:20px;top:0;width:19px;height:18px;background:linear-gradient(#a9a9a9,#8d8d8d)"></div></div>
<svg class="a" style="left:448px;top:657px;" width="16" height="16" viewBox="0 0 16 16"><g opacity="0.4"><rect x="6" y="2.5" width="8" height="9" fill="#bbb" stroke="#222" stroke-width="0.8"/><rect x="8" y="1.5" width="4" height="2" fill="#ddd" stroke="#222" stroke-width="0.6"/><path d="M2 14L8 8M4.5 8H8V11.5" fill="none" stroke="#111" stroke-width="2.6"/><path d="M2 14L8 8M4.5 8H8V11.5" fill="none" stroke="#eee" stroke-width="1.2"/></g></svg>
<svg class="a" style="left:467px;top:657px;" width="16" height="16" viewBox="0 0 16 16"><rect x="1.5" y="3" width="9" height="9" fill="#d0c098" stroke="#111" stroke-width="1"/><rect x="3.5" y="1.5" width="5" height="3" fill="#eee" stroke="#111" stroke-width="0.8"/><path d="M8 8L13.5 13.5M10 13.5H13.5V10" fill="none" stroke="#111" stroke-width="3"/><path d="M8 8L13.5 13.5M10 13.5H13.5V10" fill="none" stroke="#fff" stroke-width="1.4"/></svg>
<div class="a" style="left:503px;top:655px;width:121px;height:20px;background:linear-gradient(#7e7e7e,#747474);border:1px solid #505050;border-radius:5px"></div>
<div class="t" style="left:463.5px;width:200px;text-align:center;top:661.1px;font-size:11px;color:#4a4a4a;">Refresh Sequencer</div>
<div class="a" style="left:632px;top:658px;width:14px;height:14px;background:linear-gradient(#555,#3c3c3c);border:1px solid #1a1a1a;border-radius:3px"></div>
<div class="t" style="left:654.6px;top:661.1px;font-size:11px;color:#000;">Use Backdrop</div>
<div class="a" style="left:737px;top:655px;width:41px;height:20px;border:1px solid #262626;border-radius:5px;overflow:hidden"><div class="a" style="left:0px;top:0;width:19px;height:18px;background:linear-gradient(#a9a9a9,#8d8d8d)"></div><div class="a" style="left:19px;top:0;width:1px;height:18px;background:#262626"></div><div class="a" style="left:20px;top:0;width:19px;height:18px;background:linear-gradient(#a9a9a9,#8d8d8d)"></div></div>
<svg class="a" style="left:739px;top:657px;" width="17" height="16" viewBox="0 0 17 16"><rect x="1.8" y="4" width="13.4" height="10.2" rx="0.8" fill="#2a2a2a" stroke="#0a0a0a" stroke-width="1"/><rect x="2.4" y="4.6" width="12.2" height="3.4" fill="#e8e8e8"/><rect x="2.4" y="12.6" width="12.2" height="1.2" fill="#ddd"/><rect x="2.5" y="2.3" width="3.6" height="2" fill="#eee" stroke="#0a0a0a" stroke-width="0.8"/><circle cx="4.4" cy="6.3" r="0.9" fill="#e01010"/><circle cx="9.6" cy="10" r="3.4" fill="#e0e0e0" stroke="#0a0a0a" stroke-width="0.7"/><circle cx="9.6" cy="10" r="2.4" fill="#6a2418"/><path d="M7.4 9.2a2.4 2.4 0 0 1 3-1.5" stroke="#4a6a9a" stroke-width="1" fill="none"/><circle cx="13.5" cy="3.5" r="3" fill="#d8b020" opacity="0.8"/><path d="M13.5 1v5M11 3.5h5" stroke="#fff" stroke-width="1"/><path d="M12.6 2.6l1.8 1.8M14.4 2.6l-1.8 1.8" stroke="#fff" stroke-width="0.8"/></svg>
<svg class="a" style="left:757px;top:656px;" width="18" height="17" viewBox="0 0 18 17"><rect x="3.3" y="7.3" width="13.2" height="8.4" fill="#3a3a3a" stroke="#0a0a0a" stroke-width="1.1"/><rect x="4" y="8" width="12" height="2.4" fill="#eee"/><path d="M5 9.2h1.6M8.6 9.2h1.6M12.2 9.2h1.6" stroke="#111" stroke-width="2.4"/><path d="M7 12.8h7M10.5 11.5v3" stroke="#999" stroke-width="0.8"/><path d="M3.5 6L16 1.5" stroke="#0a0a0a" stroke-width="3.2" stroke-linecap="round"/><path d="M4 5.8L15.6 1.6" stroke="#eee" stroke-width="1.6" stroke-dasharray="2 1.8"/><path d="M2.5 4.5L4.5 10.5H2.5Z" fill="#aaccf0" stroke="#1a3060" stroke-width="0.9"/></svg>
<div class="a" style="left:5px;top:679px;width:784px;height:50px;background:#727272"></div>
<div class="a" style="left:5px;top:679px;width:7px;height:32px;background:#3e3e3e"></div>
<div class="a" style="left:12px;top:679px;width:2px;height:32px;background:#2c2c2c"></div>
<div class="a" style="left:782px;top:679px;width:7px;height:32px;background:#464646"></div>
<div class="a" style="left:42px;top:679px;width:1px;height:32px;background:#686868"></div>
<div class="a" style="left:73px;top:679px;width:1px;height:32px;background:#5a5a5a"></div>
<div class="a" style="left:104px;top:679px;width:1px;height:32px;background:#686868"></div>
<div class="a" style="left:135px;top:679px;width:1px;height:32px;background:#5a5a5a"></div>
<div class="a" style="left:166px;top:679px;width:1px;height:32px;background:#686868"></div>
<div class="a" style="left:197px;top:679px;width:1px;height:32px;background:#5a5a5a"></div>
<div class="a" style="left:228px;top:679px;width:1px;height:32px;background:#686868"></div>
<div class="a" style="left:259px;top:679px;width:1px;height:32px;background:#5a5a5a"></div>
<div class="a" style="left:289px;top:679px;width:1px;height:32px;background:#686868"></div>
<div class="a" style="left:320px;top:679px;width:1px;height:32px;background:#5a5a5a"></div>
<div class="a" style="left:351px;top:679px;width:1px;height:32px;background:#686868"></div>
<div class="a" style="left:382px;top:679px;width:1px;height:32px;background:#5a5a5a"></div>
<div class="a" style="left:413px;top:679px;width:1px;height:32px;background:#686868"></div>
<div class="a" style="left:444px;top:679px;width:1px;height:32px;background:#5a5a5a"></div>
<div class="a" style="left:475px;top:679px;width:1px;height:32px;background:#686868"></div>
<div class="a" style="left:506px;top:679px;width:1px;height:32px;background:#5a5a5a"></div>
<div class="a" style="left:536px;top:679px;width:1px;height:32px;background:#686868"></div>
<div class="a" style="left:567px;top:679px;width:1px;height:32px;background:#5a5a5a"></div>
<div class="a" style="left:598px;top:679px;width:1px;height:32px;background:#686868"></div>
<div class="a" style="left:629px;top:679px;width:1px;height:32px;background:#5a5a5a"></div>
<div class="a" style="left:660px;top:679px;width:1px;height:32px;background:#686868"></div>
<div class="a" style="left:691px;top:679px;width:1px;height:32px;background:#5a5a5a"></div>
<div class="a" style="left:722px;top:679px;width:1px;height:32px;background:#686868"></div>
<div class="a" style="left:752px;top:679px;width:1px;height:32px;background:#5a5a5a"></div>
<div class="a" style="left:14px;top:679px;width:3px;height:32px;background:#5fcb3c"></div>
<svg class="a" style="left:781px;top:680px;" width="8" height="12" viewBox="0 0 8 12"><rect x="0" y="0" width="1" height="1" fill="#e6e6e6"/><rect x="1" y="0" width="1" height="1" fill="#0a0a0a"/><rect x="4" y="0" width="1" height="1" fill="#e6e6e6"/><rect x="5" y="0" width="1" height="1" fill="#0a0a0a"/><rect x="1" y="1" width="1" height="1" fill="#e6e6e6"/><rect x="2" y="1" width="1" height="1" fill="#0a0a0a"/><rect x="5" y="1" width="1" height="1" fill="#e6e6e6"/><rect x="6" y="1" width="1" height="1" fill="#0a0a0a"/><rect x="2" y="2" width="1" height="1" fill="#e6e6e6"/><rect x="3" y="2" width="1" height="1" fill="#0a0a0a"/><rect x="6" y="2" width="1" height="1" fill="#e6e6e6"/><rect x="7" y="2" width="1" height="1" fill="#0a0a0a"/><rect x="3" y="3" width="1" height="1" fill="#e6e6e6"/><rect x="4" y="3" width="1" height="1" fill="#0a0a0a"/><rect x="7" y="3" width="1" height="1" fill="#e6e6e6"/><rect x="4" y="4" width="1" height="1" fill="#e6e6e6"/><rect x="5" y="4" width="1" height="1" fill="#0a0a0a"/><rect x="5" y="5" width="1" height="1" fill="#e6e6e6"/><rect x="6" y="5" width="1" height="1" fill="#0a0a0a"/><rect x="6" y="6" width="1" height="1" fill="#e6e6e6"/><rect x="7" y="6" width="1" height="1" fill="#0a0a0a"/><rect x="7" y="7" width="1" height="1" fill="#e6e6e6"/></svg>
<div class="a" style="left:5px;top:711px;width:784px;height:18px;background:#6e6e6e"></div>
<div class="a" style="left:9px;top:712px;width:778px;height:14px;background:#5a5a5a;border-radius:7px"></div>
<div class="a" style="left:10px;top:713px;width:774px;height:12px;background:linear-gradient(#a9a9a9,#8f8f8f);border:1px solid #3a3a3a;border-radius:6px"></div>
<div class="a" style="left:12px;top:715px;width:8px;height:8px;background:#7e7e7e;border-radius:50%"></div>
<div class="a" style="left:774px;top:715px;width:8px;height:8px;background:#7e7e7e;border-radius:50%"></div>
<div class="t" style="left:-24.0px;width:200px;text-align:center;top:713.7px;font-size:11px;color:#000;"><span class="d">2</span><span class="d">0</span></div>
<div class="t" style="left:36.97999999999999px;width:200px;text-align:center;top:713.7px;font-size:11px;color:#000;"><span class="d">4</span><span class="d">0</span></div>
<div class="t" style="left:97.95999999999998px;width:200px;text-align:center;top:713.7px;font-size:11px;color:#000;"><span class="d">6</span><span class="d">0</span></div>
<div class="t" style="left:158.94px;width:200px;text-align:center;top:713.7px;font-size:11px;color:#000;"><span class="d">8</span><span class="d">0</span></div>
<div class="t" style="left:219.91999999999996px;width:200px;text-align:center;top:713.7px;font-size:11px;color:#000;"><span class="d">1</span><span class="d">0</span><span class="d">0</span></div>
<div class="t" style="left:280.9px;width:200px;text-align:center;top:713.7px;font-size:11px;color:#000;"><span class="d">1</span><span class="d">2</span><span class="d">0</span></div>
<div class="t" style="left:341.88px;width:200px;text-align:center;top:713.7px;font-size:11px;color:#000;"><span class="d">1</span><span class="d">4</span><span class="d">0</span></div>
<div class="t" style="left:402.85999999999996px;width:200px;text-align:center;top:713.7px;font-size:11px;color:#000;"><span class="d">1</span><span class="d">6</span><span class="d">0</span></div>
<div class="t" style="left:463.8399999999999px;width:200px;text-align:center;top:713.7px;font-size:11px;color:#000;"><span class="d">1</span><span class="d">8</span><span class="d">0</span></div>
<div class="t" style="left:524.8199999999999px;width:200px;text-align:center;top:713.7px;font-size:11px;color:#000;"><span class="d">2</span><span class="d">0</span><span class="d">0</span></div>
<div class="t" style="left:585.8px;width:200px;text-align:center;top:713.7px;font-size:11px;color:#000;"><span class="d">2</span><span class="d">2</span><span class="d">0</span></div>
<div class="t" style="left:646.78px;width:200px;text-align:center;top:713.7px;font-size:11px;color:#000;"><span class="d">2</span><span class="d">4</span><span class="d">0</span></div>
<div class="a" style="left:5px;top:729px;width:784px;height:24px;background:#6a6a6a;border-top:1px solid #767676"></div>
<svg class="a" style="left:5px;top:743px;" width="12" height="12" viewBox="0 0 12 12"><rect x="0" y="0" width="1" height="1" fill="#0a0a0a"/><rect x="0" y="1" width="1" height="1" fill="#e6e6e6"/><rect x="1" y="1" width="1" height="1" fill="#0a0a0a"/><rect x="1" y="2" width="1" height="1" fill="#e6e6e6"/><rect x="2" y="2" width="1" height="1" fill="#0a0a0a"/><rect x="2" y="3" width="1" height="1" fill="#e6e6e6"/><rect x="3" y="3" width="1" height="1" fill="#0a0a0a"/><rect x="0" y="4" width="1" height="1" fill="#0a0a0a"/><rect x="3" y="4" width="1" height="1" fill="#e6e6e6"/><rect x="4" y="4" width="1" height="1" fill="#0a0a0a"/><rect x="0" y="5" width="1" height="1" fill="#e6e6e6"/><rect x="1" y="5" width="1" height="1" fill="#0a0a0a"/><rect x="4" y="5" width="1" height="1" fill="#e6e6e6"/><rect x="5" y="5" width="1" height="1" fill="#0a0a0a"/><rect x="1" y="6" width="1" height="1" fill="#e6e6e6"/><rect x="2" y="6" width="1" height="1" fill="#0a0a0a"/><rect x="5" y="6" width="1" height="1" fill="#e6e6e6"/><rect x="6" y="6" width="1" height="1" fill="#0a0a0a"/><rect x="2" y="7" width="1" height="1" fill="#e6e6e6"/><rect x="3" y="7" width="1" height="1" fill="#0a0a0a"/><rect x="6" y="7" width="1" height="1" fill="#e6e6e6"/><rect x="7" y="7" width="1" height="1" fill="#0a0a0a"/><rect x="0" y="8" width="1" height="1" fill="#0a0a0a"/><rect x="3" y="8" width="1" height="1" fill="#e6e6e6"/><rect x="4" y="8" width="1" height="1" fill="#0a0a0a"/><rect x="7" y="8" width="1" height="1" fill="#e6e6e6"/><rect x="8" y="8" width="1" height="1" fill="#0a0a0a"/><rect x="0" y="9" width="1" height="1" fill="#e6e6e6"/><rect x="1" y="9" width="1" height="1" fill="#0a0a0a"/><rect x="4" y="9" width="1" height="1" fill="#e6e6e6"/><rect x="5" y="9" width="1" height="1" fill="#0a0a0a"/><rect x="8" y="9" width="1" height="1" fill="#e6e6e6"/><rect x="9" y="9" width="1" height="1" fill="#0a0a0a"/><rect x="1" y="10" width="1" height="1" fill="#e6e6e6"/><rect x="2" y="10" width="1" height="1" fill="#0a0a0a"/><rect x="5" y="10" width="1" height="1" fill="#e6e6e6"/><rect x="6" y="10" width="1" height="1" fill="#0a0a0a"/><rect x="9" y="10" width="1" height="1" fill="#e6e6e6"/><rect x="10" y="10" width="1" height="1" fill="#0a0a0a"/><rect x="2" y="11" width="1" height="1" fill="#e6e6e6"/><rect x="3" y="11" width="1" height="1" fill="#0a0a0a"/><rect x="6" y="11" width="1" height="1" fill="#e6e6e6"/><rect x="7" y="11" width="1" height="1" fill="#0a0a0a"/><rect x="10" y="11" width="1" height="1" fill="#e6e6e6"/><rect x="11" y="11" width="1" height="1" fill="#0a0a0a"/></svg>
<div class="a" style="left:14px;top:732px;width:32px;height:20px;background:#454545;border:1px solid #262626;border-radius:5px"></div>
<svg class="a" style="left:18px;top:734px;" width="16" height="16" viewBox="0 0 16 16"><circle cx="7.8" cy="7.8" r="6.4" fill="#ececec" stroke="#0a0a0a" stroke-width="1.1"/><path d="M3.5 10a5 5 0 0 0 6 2.8" stroke="#ccc" stroke-width="1.2" fill="none"/><path d="M7.8 2.6v1M13 7.8h-1M7.8 13v-1M2.6 7.8h1" stroke="#555" stroke-width="0.9"/><path d="M7.8 7.8L10.6 4.4" stroke="#333" stroke-width="1.1"/><path d="M7.6 7.6L9.8 10.6" stroke="#d01010" stroke-width="1.5"/></svg>
<svg class="a" style="left:35px;top:735px;" width="8" height="14" viewBox="0 0 8 14"><path d="M4 0.5L7.5 5.5H0.5Z" fill="#a9a9a9"/><path d="M4 13.5L7.5 8.5H0.5Z" fill="#a9a9a9"/></svg>
<div class="t" style="left:58px;top:737.5px;font-size:11px;color:#000;">View</div>
<div class="t" style="left:103.3px;top:737.5px;font-size:11px;color:#000;">Marker</div>
<div class="t" style="left:158.3px;top:737.5px;font-size:11px;color:#000;">Frame</div>
<div class="t" style="left:210.3px;top:737.5px;font-size:11px;color:#000;">Playback</div>
<div class="a" style="left:268px;top:732px;width:41px;height:20px;border:1px solid #262626;border-radius:5px;overflow:hidden"><div class="a" style="left:0px;top:0;width:19px;height:18px;background:linear-gradient(#a9a9a9,#8d8d8d)"></div><div class="a" style="left:19px;top:0;width:1px;height:18px;background:#262626"></div><div class="a" style="left:20px;top:0;width:19px;height:18px;background:linear-gradient(#a9a9a9,#8d8d8d)"></div></div>
<svg class="a" style="left:270px;top:734px;" width="16" height="16" viewBox="0 0 16 16"><circle cx="8" cy="8" r="6.5" fill="#eee" stroke="#111"/><path d="M8 8V1.5A6.5 6.5 0 0 1 14.5 8Z" fill="#f0a020"/><path d="M8 8H14.5M8 8V1.5" stroke="#222" stroke-width="0.9"/><path d="M8 8L10.8 10.8" stroke="#d22" stroke-width="1.4"/><circle cx="8" cy="8" r="6.5" fill="none" stroke="#111"/></svg>
<svg class="a" style="left:289px;top:734px;" width="16" height="16" viewBox="0 0 16 16"><path d="M5.5 7.5V5.2a3 3 0 0 1 6 0v2.3" fill="none" stroke="#111" stroke-width="2.6"/><path d="M5.5 7.5V5.2a3 3 0 0 1 6 0v2.3" fill="none" stroke="#e8e8e8" stroke-width="1.1"/><rect x="3.5" y="7.5" width="10" height="7" fill="#eee" stroke="#111" stroke-width="1.1"/><path d="M4.5 10h8M4.5 12.5h8" stroke="#b8c0c8" stroke-width="0.6"/><rect x="8" y="10" width="1.2" height="2.4" fill="#222"/></svg>
<div class="a" style="left:313px;top:732px;width:228px;height:20px;border:1px solid #1c1c1c;border-radius:10px;overflow:hidden;background:linear-gradient(#a5a5a5,#b8b8b8)"><div class="a" style="left:115px;top:0;width:1px;height:18px;background:#1c1c1c"></div></div>
<svg class="a" style="left:319px;top:738px;" width="4" height="8" viewBox="0 0 4 8"><path d="M3.8 0.2v7.6L0.2 4Z" fill="#747474"/></svg>
<svg class="a" style="left:420px;top:738px;" width="4" height="8" viewBox="0 0 4 8"><path d="M0.2 0.2v7.6L3.8 4Z" fill="#747474"/></svg>
<svg class="a" style="left:435px;top:738px;" width="4" height="8" viewBox="0 0 4 8"><path d="M3.8 0.2v7.6L0.2 4Z" fill="#747474"/></svg>
<svg class="a" style="left:530px;top:738px;" width="4" height="8" viewBox="0 0 4 8"><path d="M0.2 0.2v7.6L3.8 4Z" fill="#747474"/></svg>
<div class="t" style="left:329.4px;top:737.5px;font-size:11px;color:#000;">Start:</div>
<div class="t" style="right:375.6px;top:737.5px;font-size:11px;color:#000;"><span class="d">1</span></div>
<div class="t" style="left:445px;top:737.5px;font-size:11px;color:#000;">End:</div>
<div class="t" style="right:263.8px;top:737.5px;font-size:11px;color:#000;"><span class="d">2</span><span class="d">5</span><span class="d">0</span></div>
<div class="a" style="left:546px;top:732px;width:90px;height:20px;background:linear-gradient(#a5a5a5,#b8b8b8);border:1px solid #1c1c1c;border-radius:10px"></div>
<svg class="a" style="left:552px;top:738px;" width="4" height="8" viewBox="0 0 4 8"><path d="M3.8 0.2v7.6L0.2 4Z" fill="#747474"/></svg>
<svg class="a" style="left:626px;top:738px;" width="4" height="8" viewBox="0 0 4 8"><path d="M0.2 0.2v7.6L3.8 4Z" fill="#747474"/></svg>
<div class="t" style="right:169.5px;top:737.5px;font-size:11px;color:#000;"><span class="d">1</span></div>
<div class="a" style="left:652px;top:732px;width:121px;height:20px;border:1px solid #262626;border-radius:5px;overflow:hidden"><div class="a" style="left:0px;top:0;width:19px;height:18px;background:linear-gradient(#a9a9a9,#8d8d8d)"></div><div class="a" style="left:19px;top:0;width:1px;height:18px;background:#262626"></div><div class="a" style="left:20px;top:0;width:19px;height:18px;background:linear-gradient(#a9a9a9,#8d8d8d)"></div><div class="a" style="left:39px;top:0;width:1px;height:18px;background:#262626"></div><div class="a" style="left:40px;top:0;width:19px;height:18px;background:linear-gradient(#a9a9a9,#8d8d8d)"></div><div class="a" style="left:59px;top:0;width:1px;height:18px;background:#262626"></div><div class="a" style="left:60px;top:0;width:19px;height:18px;background:linear-gradient(#a9a9a9,#8d8d8d)"></div><div class="a" style="left:79px;top:0;width:1px;height:18px;background:#262626"></div><div class="a" style="left:80px;top:0;width:19px;height:18px;background:linear-gradient(#a9a9a9,#8d8d8d)"></div><div class="a" style="left:99px;top:0;width:1px;height:18px;background:#262626"></div><div class="a" style="left:100px;top:0;width:19px;height:18px;background:linear-gradient(#a9a9a9,#8d8d8d)"></div></div>
<svg class="a" style="left:653px;top:733px;" width="17" height="17" viewBox="0 0 17 17"><rect x="1.5" y="4" width="2" height="9" fill="#f0f0f0" stroke="#0a0a0a" stroke-width="1" stroke-linejoin="round"/><path d="M3.8 8.5L9 4.5V12.5Z" fill="#f0f0f0" stroke="#0a0a0a" stroke-width="1" stroke-linejoin="round"/><path d="M9 8.5L14.5 4.5V12.5Z" fill="#f0f0f0" stroke="#0a0a0a" stroke-width="1" stroke-linejoin="round"/></svg>
<svg class="a" style="left:673px;top:733px;" width="17" height="17" viewBox="0 0 17 17"><path d="M2 8.5L8 4.5V12.5Z" fill="#f0f0f0" stroke="#0a0a0a" stroke-width="1" stroke-linejoin="round"/><path d="M8 8.5L14 4.5V12.5Z" fill="#f0f0f0" stroke="#0a0a0a" stroke-width="1" stroke-linejoin="round"/></svg>
<svg class="a" style="left:693px;top:733px;" width="17" height="17" viewBox="0 0 17 17"><path d="M2.5 8.5L13.5 2.5V14.5Z" fill="#f0f0f0" stroke="#0a0a0a" stroke-width="1" stroke-linejoin="round"/></svg>
<svg class="a" style="left:713px;top:733px;" width="17" height="17" viewBox="0 0 17 17"><path d="M13.5 8.5L2.5 2.5V14.5Z" fill="#f0f0f0" stroke="#0a0a0a" stroke-width="1" stroke-linejoin="round"/></svg>
<svg class="a" style="left:733px;top:733px;" width="17" height="17" viewBox="0 0 17 17"><path d="M2.5 4.5L8.5 8.5L2.5 12.5Z" fill="#f0f0f0" stroke="#0a0a0a" stroke-width="1" stroke-linejoin="round"/><path d="M8.5 4.5L14.5 8.5L8.5 12.5Z" fill="#f0f0f0" stroke="#0a0a0a" stroke-width="1" stroke-linejoin="round"/></svg>
<svg class="a" style="left:753px;top:733px;" width="17" height="17" viewBox="0 0 17 17"><path d="M1.5 4.5L7 8.5L1.5 12.5Z" fill="#f0f0f0" stroke="#0a0a0a" stroke-width="1" stroke-linejoin="round"/><path d="M7 4.5L12.5 8.5L7 12.5Z" fill="#f0f0f0" stroke="#0a0a0a" stroke-width="1" stroke-linejoin="round"/><rect x="12.8" y="4" width="2" height="9" fill="#f0f0f0" stroke="#0a0a0a" stroke-width="1" stroke-linejoin="round"/></svg>
<div class="a" style="left:777px;top:732px;width:20px;height:20px;background:linear-gradient(#555,#373737);border:1px solid #1a1a1a;border-radius:5px"></div>
<div class="t" style="left:784px;top:737.5px;font-size:11px;color:#fff;">N</div>
</body></html>
